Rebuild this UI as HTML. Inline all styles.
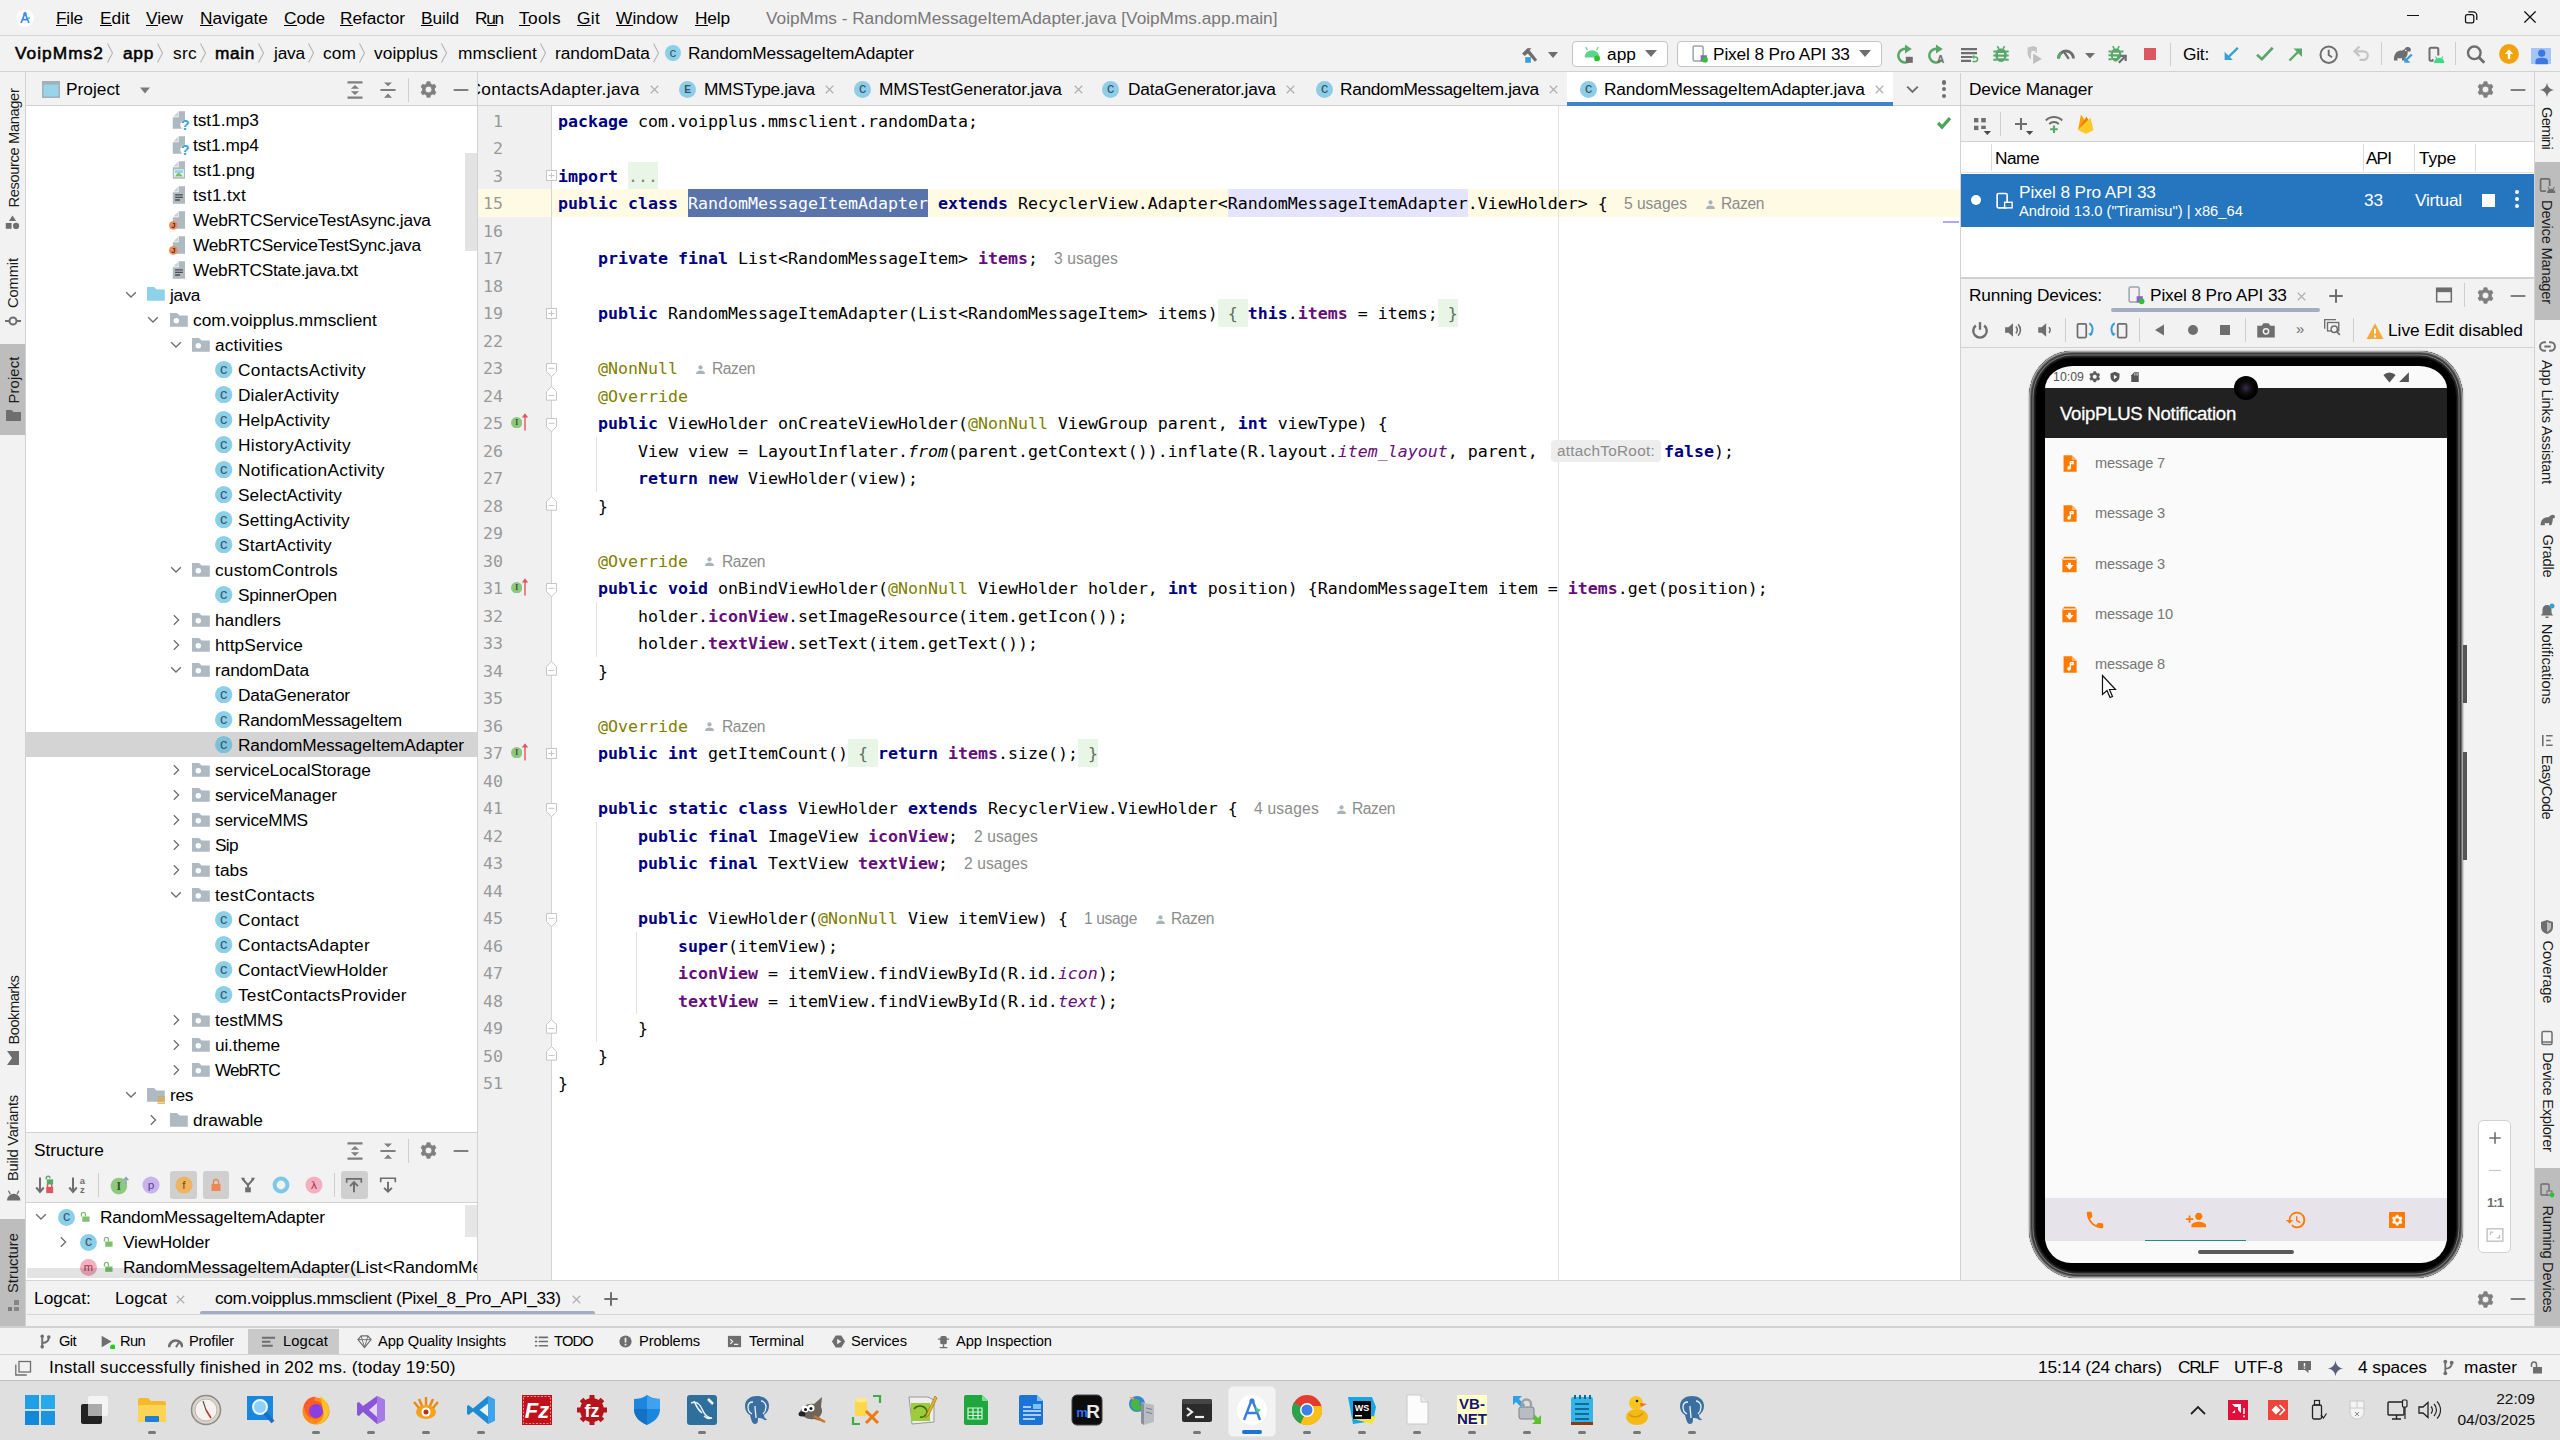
<!DOCTYPE html><html><head><meta charset="utf-8"><title>VoipMms - RandomMessageItemAdapter.java</title><style>
html,body{margin:0;padding:0;background:#f2f2f2;}
#r{position:relative;width:2560px;height:1440px;overflow:hidden;background:#f2f2f2;font-family:"Liberation Sans",sans-serif;color:#000;}
#r div,#r span.t,#r svg{position:absolute;}
#r .t{white-space:pre;}
.code{font-family:"DejaVu Sans Mono","Liberation Mono",monospace;font-size:16.6px;letter-spacing:0.007px;white-space:pre;line-height:27.5px;height:27.5px;color:#000;}
.code b{color:#000080;}
.code .f{color:#660e7a;font-weight:bold;}
.code .a{color:#808000;}
.code i{color:#000;}
.code i.s{color:#660e7a;}
.ln{font-family:"DejaVu Sans Mono","Liberation Mono",monospace;font-size:16.6px;color:#999;line-height:27.5px;text-align:right;width:40px;}
.hint{color:#8c8c8c;}
.clip{overflow:hidden;}
</style></head><body><div id="r">
<div style="left:0px;top:35px;width:2560px;height:1px;background:#d6d6d6;"></div>
<div style="left:0px;top:71px;width:2560px;height:1px;background:#d1d1d1;"></div>
<svg style="left:16.0px;top:9.0px;" width="18" height="18" viewBox="0 0 16 16"><circle cx="8" cy="8" r="7.800" fill="#fff"/><path d="M8 3.500 4.500 12.500M8 3.500l3.500 9M5.500 9.500h5" fill="none" stroke="#4285f4" stroke-width="1.500"/><circle cx="8" cy="4.200" r="1.500" fill="#4285f4"/><circle cx="11.500" cy="8" r="1" fill="#3ddc84"/></svg>
<span class="t" style="top:6.0px;line-height:24px;font-size:17.3px;left:56px;color:#000;letter-spacing:-0.219px;">File</span>
<div style="left:56px;top:25px;width:11px;height:1px;background:#000;"></div>
<span class="t" style="top:6.0px;line-height:24px;font-size:17.3px;left:100px;color:#000;letter-spacing:0.047px;">Edit</span>
<div style="left:100px;top:25px;width:12px;height:1px;background:#000;"></div>
<span class="t" style="top:6.0px;line-height:24px;font-size:17.3px;left:146px;color:#000;letter-spacing:-0.047px;">View</span>
<div style="left:146px;top:25px;width:12px;height:1px;background:#000;"></div>
<span class="t" style="top:6.0px;line-height:24px;font-size:17.3px;left:200px;color:#000;letter-spacing:-0.035px;">Navigate</span>
<div style="left:200px;top:25px;width:13px;height:1px;background:#000;"></div>
<span class="t" style="top:6.0px;line-height:24px;font-size:17.3px;left:284px;color:#000;letter-spacing:-0.090px;">Code</span>
<div style="left:284px;top:25px;width:13px;height:1px;background:#000;"></div>
<span class="t" style="top:6.0px;line-height:24px;font-size:17.3px;left:340px;color:#000;letter-spacing:-0.048px;">Refactor</span>
<div style="left:340px;top:25px;width:13px;height:1px;background:#000;"></div>
<span class="t" style="top:6.0px;line-height:24px;font-size:17.3px;left:421px;color:#000;letter-spacing:-0.094px;">Build</span>
<div style="left:421px;top:25px;width:12px;height:1px;background:#000;"></div>
<span class="t" style="top:6.0px;line-height:24px;font-size:17.3px;left:475px;color:#000;letter-spacing:-1.246px;">Run</span>
<div style="left:487px;top:25px;width:10px;height:1px;background:#000;"></div>
<span class="t" style="top:6.0px;line-height:24px;font-size:17.3px;left:519px;color:#000;letter-spacing:0.323px;">Tools</span>
<div style="left:519px;top:25px;width:11px;height:1px;background:#000;"></div>
<span class="t" style="top:6.0px;line-height:24px;font-size:17.3px;left:577px;color:#000;letter-spacing:0.298px;">Git</span>
<div style="left:577px;top:25px;width:14px;height:1px;background:#000;"></div>
<span class="t" style="top:6.0px;line-height:24px;font-size:17.3px;left:616px;color:#000;letter-spacing:0.078px;">Window</span>
<div style="left:616px;top:25px;width:17px;height:1px;background:#000;"></div>
<span class="t" style="top:6.0px;line-height:24px;font-size:17.3px;left:695px;color:#000;letter-spacing:-0.145px;">Help</span>
<div style="left:695px;top:25px;width:13px;height:1px;background:#000;"></div>
<span class="t" style="top:6.0px;line-height:24px;font-size:17.3px;left:766px;color:#787878;letter-spacing:-0.026px;">VoipMms - RandomMessageItemAdapter.java [VoipMms.app.main]</span>
<div style="left:2407px;top:14.8px;width:12px;height:1.3px;background:#111;"></div>
<svg style="left:2463px;top:9px;" width="16" height="16" viewBox="0 0 16 16"><rect x="2.500" y="5.500" width="8.300" height="8.300" rx="1.900" fill="none" stroke="#111" stroke-width="1.250"/><path d="M5.300 2.800h4.700a3.800 3.800 0 0 1 3.800 3.800v4.400" fill="none" stroke="#111" stroke-width="1.250"/></svg>
<svg style="left:2524px;top:11px;" width="12" height="12" viewBox="0 0 12 12"><path d="M0.400 0.400 11.600 11.600M11.600 0.400 0.400 11.600" stroke="#111" stroke-width="1.250"/></svg>
<span class="t" style="top:41.0px;line-height:24px;font-size:17.3px;left:15px;color:#000;letter-spacing:1.029px;-webkit-text-stroke:0.550px #000;">VoipMms2</span>
<svg style="left:105px;top:42px;" width="10" height="22" viewBox="0 0 10 22"><path d="M2.5 1.5 7.5 11 2.5 20.5" fill="none" stroke="#b4b4b4" stroke-width="1.1"/></svg>
<span class="t" style="top:41.0px;line-height:24px;font-size:17.3px;left:123px;color:#000;letter-spacing:0.712px;-webkit-text-stroke:0.550px #000;">app</span>
<svg style="left:155px;top:42px;" width="10" height="22" viewBox="0 0 10 22"><path d="M2.5 1.5 7.5 11 2.5 20.5" fill="none" stroke="#b4b4b4" stroke-width="1.1"/></svg>
<span class="t" style="top:41.0px;line-height:24px;font-size:17.3px;left:173px;color:#000;letter-spacing:0.313px;">src</span>
<svg style="left:198px;top:42px;" width="10" height="22" viewBox="0 0 10 22"><path d="M2.5 1.5 7.5 11 2.5 20.5" fill="none" stroke="#b4b4b4" stroke-width="1.1"/></svg>
<span class="t" style="top:41.0px;line-height:24px;font-size:17.3px;left:215px;color:#000;letter-spacing:0.625px;-webkit-text-stroke:0.550px #000;">main</span>
<svg style="left:256px;top:42px;" width="10" height="22" viewBox="0 0 10 22"><path d="M2.5 1.5 7.5 11 2.5 20.5" fill="none" stroke="#b4b4b4" stroke-width="1.1"/></svg>
<span class="t" style="top:41.0px;line-height:24px;font-size:17.3px;left:274px;color:#000;letter-spacing:-0.184px;">java</span>
<svg style="left:306px;top:42px;" width="10" height="22" viewBox="0 0 10 22"><path d="M2.5 1.5 7.5 11 2.5 20.5" fill="none" stroke="#b4b4b4" stroke-width="1.1"/></svg>
<span class="t" style="top:41.0px;line-height:24px;font-size:17.3px;left:323px;color:#000;letter-spacing:0.106px;">com</span>
<svg style="left:357px;top:42px;" width="10" height="22" viewBox="0 0 10 22"><path d="M2.5 1.5 7.5 11 2.5 20.5" fill="none" stroke="#b4b4b4" stroke-width="1.1"/></svg>
<span class="t" style="top:41.0px;line-height:24px;font-size:17.3px;left:374px;color:#000;letter-spacing:0.066px;">voipplus</span>
<svg style="left:439px;top:42px;" width="10" height="22" viewBox="0 0 10 22"><path d="M2.5 1.5 7.5 11 2.5 20.5" fill="none" stroke="#b4b4b4" stroke-width="1.1"/></svg>
<span class="t" style="top:41.0px;line-height:24px;font-size:17.3px;left:458px;color:#000;letter-spacing:0.127px;">mmsclient</span>
<svg style="left:538px;top:42px;" width="10" height="22" viewBox="0 0 10 22"><path d="M2.5 1.5 7.5 11 2.5 20.5" fill="none" stroke="#b4b4b4" stroke-width="1.1"/></svg>
<span class="t" style="top:41.0px;line-height:24px;font-size:17.3px;left:555px;color:#000;letter-spacing:-0.020px;">randomData</span>
<svg style="left:651px;top:42px;" width="10" height="22" viewBox="0 0 10 22"><path d="M2.5 1.5 7.5 11 2.5 20.5" fill="none" stroke="#b4b4b4" stroke-width="1.1"/></svg>
<svg style="left:665.0px;top:45.0px;" width="16" height="16" viewBox="0 0 16 16"><circle cx="8" cy="8" r="8" fill="#8bd0e8"/><text x="8" y="11.7" text-anchor="middle" font-family="Liberation Sans, sans-serif" font-size="13.6" font-weight="normal" fill="#3b5a6b">c</text></svg>
<span class="t" style="top:41.0px;line-height:24px;font-size:17.3px;left:688px;color:#000;letter-spacing:-0.160px;">RandomMessageItemAdapter</span>
<svg style="left:1519.0px;top:44.0px;" width="20" height="20" viewBox="0 0 16 16"><path d="M2.5 7.5 7 3.2l3 .3L8.5 5l6 7.5-1.8 1.6L7 7.5 4.5 9.5z" fill="#6e6e6e"/><rect x="5" y="10.5" width="4.5" height="4.5" fill="#389fd6"/></svg>
<svg style="left:1547px;top:51px;" width="12" height="8" viewBox="0 0 12 8"><path d="M1 1h10L6 7z" fill="#6e6e6e"/></svg>
<div style="left:1571.500px;top:40.500px;width:96.500px;height:26.500px;background:#fff;border:1px solid #c4c4c4;border-radius:4px;box-sizing:border-box;"></div>
<svg style="left:1583.0px;top:44.0px;" width="18" height="18" viewBox="0 0 16 16"><path d="M1.5 12a6.5 6.5 0 0 1 13 0z" fill="#5fd38d"/><path d="M4 5.5 2.5 2.8M12 5.5l1.5-2.7" stroke="#5fd38d" stroke-width="1.1"/><circle cx="12.5" cy="12.8" r="2.6" fill="#2fc033"/></svg>
<span class="t" style="top:42.0px;line-height:24px;font-size:17.3px;left:1607px;color:#000;letter-spacing:0.045px;">app</span>
<svg style="left:1644px;top:49px;" width="14" height="9" viewBox="0 0 14 9"><path d="M1 1h12L7 8z" fill="#6e6e6e"/></svg>
<div style="left:1676.500px;top:40.500px;width:205.500px;height:26.500px;background:#fff;border:1px solid #c4c4c4;border-radius:4px;box-sizing:border-box;"></div>
<svg style="left:1690.0px;top:44.0px;" width="20" height="20" viewBox="0 0 16 16"><rect x="2.5" y="1.5" width="8" height="12" rx="1.2" fill="#fff" stroke="#9aa4ae" stroke-width="1.2"/><rect x="8.5" y="9" width="5" height="5" fill="#8f5fd0"/><circle cx="12" cy="12.5" r="2.3" fill="#2fc033"/></svg>
<span class="t" style="top:42.0px;line-height:24px;font-size:17.3px;left:1713px;color:#000;letter-spacing:-0.136px;">Pixel 8 Pro API 33</span>
<svg style="left:1858px;top:49px;" width="14" height="9" viewBox="0 0 14 9"><path d="M1 1h12L7 8z" fill="#6e6e6e"/></svg>
<svg style="left:1894.5px;top:44.0px;" width="20" height="20" viewBox="0 0 20 20"><path d="M10.500 4.700A6.900 6.900 0 1 0 15.600 16" fill="none" stroke="#59a869" stroke-width="2.500"/><path d="M10 0.500 16.800 5 10 9.500z" fill="#59a869"/><rect x="10.800" y="12.800" width="7" height="6" fill="#6e6e6e"/></svg>
<svg style="left:1925.5px;top:44.0px;" width="20" height="20" viewBox="0 0 20 20"><path d="M10.500 4.700A6.900 6.900 0 1 0 15.600 16" fill="none" stroke="#59a869" stroke-width="2.500"/><path d="M10 0.500 16.800 5 10 9.500z" fill="#59a869"/><text x="14.500" y="18.800" font-family="Liberation Sans, sans-serif" font-size="10.500" font-weight="bold" fill="#6e6e6e" text-anchor="middle">A</text></svg>
<svg style="left:1959.0px;top:44.0px;" width="20" height="20" viewBox="0 0 20 20"><path d="M2 5.200h16M2 9.200h16M2 13h11M2 16.800h10" stroke="#6e6e6e" stroke-width="2.200"/><path d="M13.500 17.500h2.800a2.300 2.300 0 0 0 0-4.600H14.800" fill="none" stroke="#59a869" stroke-width="1.500"/><path d="M15.300 10.600 12.500 12.900l2.800 2.300z" fill="#59a869"/></svg>
<svg style="left:1991.0px;top:44.0px;" width="20" height="20" viewBox="0 0 20 20"><path d="M10 4.500c3.600 0 5.600 2.600 5.600 6.500s-2 7-5.600 7-5.600-3.100-5.600-7 2-6.500 5.600-6.500z" fill="#59a869"/><path d="M6.300 2.200 8 4.800M13.700 2.200 12 4.800" stroke="#59a869" stroke-width="1.600"/><path d="M2.300 7.500h3.500M2.300 11.500h3M2.300 15.700h3.500M17.700 7.500h-3.500M17.700 11.500h-3M17.700 15.700h-3.500" stroke="#59a869" stroke-width="1.900"/><path d="M7 9.700h6M7 13.500h6" stroke="#f2f2f2" stroke-width="1.500"/></svg>
<svg style="left:2023.0px;top:44.0px;" width="20" height="20" viewBox="0 0 20 20"><path d="M4.500 3.500 10.500 2l3.500 1.500V9l-6 0v6.500C5.500 14 4.500 11 4.500 8z" fill="#c4c4c4"/><path d="M8.500 7h4v8h-4z" fill="#f2f2f2"/><path d="M10.200 9.500 18.800 15l-8.600 5z" fill="#bdbdbd"/></svg>
<svg style="left:2054.5px;top:43.0px;" width="22" height="22" viewBox="0 0 22 22"><path d="M3.500 15.500a7.500 7.500 0 0 1 15 0" fill="none" stroke="#6e6e6e" stroke-width="3"/><path d="M3.500 15.500a7.500 7.500 0 0 1 2.600-5.700" fill="none" stroke="#59a869" stroke-width="3"/><path d="M13.800 15.800 8 7.500" stroke="#6e6e6e" stroke-width="2.300"/></svg>
<svg style="left:2085px;top:53px;" width="10" height="6" viewBox="0 0 10 6"><path d="M0 0h10L5 5.500z" fill="#6e6e6e"/></svg>
<svg style="left:2107.5px;top:44.0px;" width="20" height="20" viewBox="0 0 20 20"><path d="M8 4.500c3.300 0 5.200 2.500 5.200 6.200s-1.900 6.800-5.200 6.800-5.200-3.100-5.200-6.800S4.700 4.500 8 4.500z" fill="#59a869"/><path d="M4.800 2.200 6.300 4.800M11.200 2.200 9.700 4.800" stroke="#59a869" stroke-width="1.600"/><path d="M0.500 7.500h3.300M0.500 11.300h2.800M0.500 15.300h3.300M15.500 7.500h-3.300" stroke="#59a869" stroke-width="1.900"/><path d="M5 9.500h6M5 13.200h4" stroke="#f2f2f2" stroke-width="1.400"/><path d="M10.500 19 17.500 12" stroke="#f2f2f2" stroke-width="4.500"/><path d="M10.800 18.700 17.300 12.200M12.500 11.800h5.200V17" fill="none" stroke="#6e6e6e" stroke-width="2.200"/></svg>
<div style="left:2143.7px;top:48px;width:12.5px;height:12.3px;background:#db5860;"></div>
<div style="left:2170px;top:43px;width:1px;height:23px;background:#cdcdcd;"></div>
<span class="t" style="top:42.0px;line-height:24px;font-size:17.3px;left:2183px;color:#000;letter-spacing:-0.228px;">Git:</span>
<svg style="left:2221px;top:44px;" width="20" height="20" viewBox="0 0 20 20"><path d="M16.800 3.800 6 14.500" stroke="#389fd6" stroke-width="2.400"/><path d="M3.600 7.800V16h8.200z" fill="#389fd6"/></svg>
<svg style="left:2254px;top:44px;" width="20" height="20" viewBox="0 0 20 20"><path d="M3 10.800 7.900 15.200 18.700 3.800" fill="none" stroke="#59a869" stroke-width="2.700"/></svg>
<svg style="left:2286px;top:44px;" width="20" height="20" viewBox="0 0 20 20"><path d="M3.500 16.500 14 6" stroke="#59a869" stroke-width="2.400"/><path d="M7.500 4.500H16v8.500z" fill="#59a869"/></svg>
<svg style="left:2318px;top:43.5px;" width="22" height="22" viewBox="0 0 22 22"><circle cx="10.700" cy="10.700" r="8.200" fill="none" stroke="#6e6e6e" stroke-width="2"/><path d="M10.700 5.800v5.200l3.300 2.200" fill="none" stroke="#6e6e6e" stroke-width="1.900"/></svg>
<svg style="left:2351px;top:44px;" width="20" height="20" viewBox="0 0 20 20"><path d="M5.500 7.300h7a4.300 4.300 0 0 1 0 8.600H8.500" fill="none" stroke="#c4c4c4" stroke-width="2.200"/><path d="M8.500 2.500 3.500 7.300l5 4.800" fill="none" stroke="#c4c4c4" stroke-width="2.200"/></svg>
<div style="left:2381px;top:42px;width:1px;height:23px;background:#cdcdcd;"></div>
<svg style="left:2393px;top:45px;" width="22" height="20" viewBox="0 0 22 20"><path d="M1 15.500c-.5-6 2.500-10 7-10 1.500 0 3-.5 4-2 1-1.500 3-1.800 4.500-1 1.500.8 1.800 2.500 1 3.500-.8 1-2 1-2.800.3 0 3-.5 5.500-1.700 7.200l-1.500 2h-2.500v-2.500c-1.500.5-3 .5-4.500 0v2.500z" fill="#6e6e6e"/><circle cx="12.800" cy="5.500" r=".8" fill="#f2f2f2"/><path d="M18.800 9.500 13 15.300" stroke="#f2f2f2" stroke-width="4.500"/><path d="M18.800 9.500 13.500 14.800" stroke="#389fd6" stroke-width="2.300"/><path d="M11.300 11.500v6.200h6.200z" fill="#389fd6"/></svg>
<svg style="left:2426px;top:45px;" width="22" height="20" viewBox="0 0 22 20"><rect x="3.500" y="2.800" width="8.800" height="13" rx="1.500" fill="none" stroke="#6e6e6e" stroke-width="2"/><path d="M6 14.800h4" stroke="#6e6e6e" stroke-width="1.400"/><rect x="7.500" y="10.500" width="12" height="9" fill="#f2f2f2"/><path d="M8 18a5.200 5.200 0 0 1 10.400 0z" fill="#3ddc84"/><path d="M9.500 11.500l1.300 2.200M16.800 11.500l-1.300 2.200" stroke="#3ddc84" stroke-width="1.200"/></svg>
<div style="left:2455px;top:42px;width:1px;height:23px;background:#cdcdcd;"></div>
<svg style="left:2465px;top:44px;" width="22" height="22" viewBox="0 0 22 22"><circle cx="9.300" cy="8.800" r="6.300" fill="none" stroke="#6e6e6e" stroke-width="2.400"/><path d="M13.800 13.300 19.300 18.800" stroke="#6e6e6e" stroke-width="2.800"/></svg>
<svg style="left:2499px;top:44px;" width="20" height="20" viewBox="0 0 20 20"><circle cx="10" cy="10" r="9.900" fill="#f0a30a"/><path d="M10 15V6.500" stroke="#fff" stroke-width="2.400"/><path d="M5.800 10 10 5.500 14.200 10z" fill="#fff"/></svg>
<div style="left:2531px;top:48px;width:20px;height:16.2px;background:#a6c5f7;"></div>
<svg style="left:2531px;top:48px;" width="20" height="17" viewBox="0 0 20 17"><circle cx="10.700" cy="5.200" r="3.600" fill="#3d77e0"/><path d="M4.500 16.200v-3.500c0-2 2-3 6.200-3s6.200 1 6.200 3v3.500z" fill="#3d77e0"/></svg>
<div style="left:25px;top:72px;width:1px;height:1255px;background:#d1d1d1;"></div>
<div style="left:0px;top:344px;width:25px;height:91px;background:#bdbdbd;"></div>
<div style="left:0px;top:1219px;width:25px;height:108px;background:#bdbdbd;"></div>
<span class="t" style="left:-46.5px;top:137.5px;width:119px;height:20px;line-height:20px;font-size:14.7px;letter-spacing:-0.376px;color:#1a1a1a;transform:rotate(-90deg);transform-origin:50% 50%;text-align:left;">Resource Manager</span>
<svg style="left:5.300000000000001px;top:215.0px;" width="15" height="15" viewBox="0 0 16 16"><path d="M8 0.500l3.800 6h-7.600z" fill="#6e6e6e"/><rect x="0.800" y="8.500" width="6.200" height="6.200" fill="#6e6e6e"/><circle cx="11.800" cy="11.600" r="3.300" fill="#6e6e6e"/></svg>
<span class="t" style="left:-12.0px;top:273.0px;width:50px;height:20px;line-height:20px;font-size:14.7px;letter-spacing:-0.106px;color:#1a1a1a;transform:rotate(-90deg);transform-origin:50% 50%;text-align:left;">Commit</span>
<svg style="left:5.199999999999999px;top:313.3px;" width="16" height="16" viewBox="0 0 16 16"><circle cx="8" cy="8" r="3.500" fill="none" stroke="#6e6e6e" stroke-width="2"/><path d="M0 8h4.500M11.500 8H16" stroke="#6e6e6e" stroke-width="2"/></svg>
<span class="t" style="left:-10.5px;top:369.5px;width:47px;height:20px;line-height:20px;font-size:14.7px;letter-spacing:0.178px;color:#1a1a1a;transform:rotate(-90deg);transform-origin:50% 50%;text-align:left;">Project</span>
<svg style="left:5.8px;top:409.7px;" width="15" height="11.2" viewBox="0 0 15 11.200"><path fill="#6e6e6e" d="M0 0h5.500l2 2H15v9.200H0z"/></svg>
<span class="t" style="left:-21.5px;top:999.5px;width:69px;height:20px;line-height:20px;font-size:14.7px;letter-spacing:-0.503px;color:#1a1a1a;transform:rotate(-90deg);transform-origin:50% 50%;text-align:left;">Bookmarks</span>
<svg style="left:7px;top:1051px;" width="12" height="14" viewBox="0 0 12 14"><path d="M12 0H0l5 7-5 7h12z" fill="#6e6e6e"/></svg>
<span class="t" style="left:-30.0px;top:1128.0px;width:86px;height:20px;line-height:20px;font-size:14.7px;letter-spacing:-0.258px;color:#1a1a1a;transform:rotate(-90deg);transform-origin:50% 50%;text-align:left;">Build Variants</span>
<svg style="left:6.5px;top:1188.5px;" width="14" height="12" viewBox="0 0 14 12"><path d="M0 11.500a6.700 6.700 0 0 1 13.400 0z" fill="#6e6e6e"/><path d="M3.300 5.200 1.500 1.800M10.100 5.200l1.800-3.400" stroke="#6e6e6e" stroke-width="1.300"/></svg>
<span class="t" style="left:-17.0px;top:1253.0px;width:60px;height:20px;line-height:20px;font-size:14.7px;letter-spacing:0.040px;color:#1a1a1a;transform:rotate(-90deg);transform-origin:50% 50%;text-align:left;">Structure</span>
<div style="left:7.8px;top:1306.5px;width:4.7px;height:4.7px;background:#7c7c7c;"></div>
<div style="left:14px;top:1300.2px;width:4.7px;height:4.7px;background:#858585;"></div>
<div style="left:14px;top:1306.5px;width:4.7px;height:4.7px;background:#858585;"></div>
<div style="left:26px;top:105px;width:451px;height:1px;background:#d1d1d1;"></div>
<div style="left:477px;top:72px;width:1px;height:1208px;background:#d1d1d1;"></div>
<svg style="left:42px;top:81px;" width="18" height="17" viewBox="0 0 18 17"><rect x="0" y="0" width="18" height="17" fill="#a3afb9"/><rect x="1.500" y="3.500" width="15" height="12" fill="#98d4ea"/></svg>
<span class="t" style="top:77.0px;line-height:24px;font-size:17.3px;left:66px;color:#000;letter-spacing:0.022px;">Project</span>
<svg style="left:140px;top:87px;" width="10" height="7" viewBox="0 0 10 7"><path d="M0 0.500h10L5 6.500z" fill="#7a7a7a"/></svg>
<svg style="left:347px;top:81px;" width="16" height="18" viewBox="0 0 16 18"><rect x="0.4" y="0.3" width="15.2" height="2.3" rx="0.6" fill="#7f7f7f"/><rect x="0.4" y="15.4" width="15.2" height="2.3" rx="0.6" fill="#7f7f7f"/><path d="M8 4.1l4.1 3.6H3.9zM8 13.9l4.100-3.600H3.900z" fill="#7f7f7f"/></svg>
<svg style="left:380px;top:81px;" width="16" height="18" viewBox="0 0 16 18"><rect x="0.4" y="7.9" width="15.2" height="2.1" rx="0.6" fill="#7f7f7f"/><path d="M8 5.300l4-3.800H4zM8 12.600l4 4.100H4z" fill="#7f7f7f"/></svg>
<div style="left:408px;top:78px;width:1px;height:24px;background:#cfcfcf;"></div>
<svg style="left:420.2px;top:81.3px;" width="17" height="17" viewBox="0 0 24 24"><path fill="#7f7f7f" fill-rule="evenodd" stroke="#7f7f7f" stroke-width="1" stroke-linejoin="round" d="M9.31 3.73 L9.83 1.01 L14.17 1.01 L14.69 3.73 L17.82 5.53 L20.43 4.63 L22.60 8.38 L20.51 10.19 L20.51 13.81 L22.60 15.62 L20.43 19.37 L17.82 18.47 L14.69 20.27 L14.17 22.99 L9.83 22.99 L9.31 20.27 L6.18 18.47 L3.57 19.37 L1.40 15.62 L3.49 13.81 L3.49 10.19 L1.40 8.38 L3.57 4.63 L6.18 5.53Z M16.70 12.00 A4.7 4.7 0 1 0 7.30 12.00 A4.7 4.7 0 1 0 16.70 12.00Z"/></svg>
<svg style="left:453.0px;top:82.0px;" width="16" height="16" viewBox="0 0 16 16"><rect x="0.5" y="7" width="15" height="2" rx="0.8" fill="#7f7f7f"/></svg>
<div style="left:26px;top:106px;width:451px;height:1026px;background:#fff;"></div>
<div style="left:465px;top:152.5px;width:12px;height:98px;background:#e3e3e3;"></div>
<div style="left:26px;top:732.3px;width:451px;height:24.5px;background:#d4d4d4;"></div>
<svg style="left:169px;top:110px;" width="22" height="21" viewBox="0 0 22 21"><path fill="#aeb9c0" d="M9.6 1.2H16V18.800H3.800V7.300H9.600z"/><path fill="#c6cfd5" d="M8.800 2v4.500H4.400z"/><circle cx="16.3" cy="14.8" r="5" fill="#fff"/><text x="16.3" y="19.7" font-family="Liberation Sans, sans-serif" font-size="14.500" font-weight="bold" fill="#35a5d8" text-anchor="middle">?</text></svg>
<span class="t" style="top:108.0px;line-height:24px;font-size:17.3px;left:193px;color:#000;letter-spacing:-0.043px;">tst1.mp3</span>
<svg style="left:169px;top:135px;" width="22" height="21" viewBox="0 0 22 21"><path fill="#aeb9c0" d="M9.6 1.2H16V18.800H3.800V7.300H9.600z"/><path fill="#c6cfd5" d="M8.800 2v4.500H4.400z"/><circle cx="16.3" cy="14.8" r="5" fill="#fff"/><text x="16.3" y="19.7" font-family="Liberation Sans, sans-serif" font-size="14.500" font-weight="bold" fill="#35a5d8" text-anchor="middle">?</text></svg>
<span class="t" style="top:133.0px;line-height:24px;font-size:17.3px;left:193px;color:#000;letter-spacing:-0.043px;">tst1.mp4</span>
<svg style="left:169px;top:160px;" width="22" height="21" viewBox="0 0 22 21"><path fill="#aeb9c0" d="M9.6 1.2H16V18.800H3.800V7.300H9.600z"/><path fill="#c6cfd5" d="M8.800 2v4.500H4.400z"/><rect x="5.2" y="9.4" width="9.600" height="7.800" fill="#f4f8f4"/><rect x="6" y="10.2" width="8" height="3" fill="#8fd3ee"/><path d="M6 16.400c1.500-3 3.500-4.200 5-3 1.200.9 2 1.600 3 3z" fill="#7cc05a"/></svg>
<span class="t" style="top:158.0px;line-height:24px;font-size:17.3px;left:193px;color:#000;letter-spacing:0.056px;">tst1.png</span>
<svg style="left:169px;top:185px;" width="22" height="21" viewBox="0 0 22 21"><path fill="#aeb9c0" d="M9.6 1.2H16V18.800H3.800V7.300H9.600z"/><path fill="#c6cfd5" d="M8.800 2v4.500H4.400z"/><path d="M6.1 9.800h7.700M6.100 12.400h7.700M6.100 15h4.900" stroke="#4d4d4d" stroke-width="1.300"/></svg>
<span class="t" style="top:183.0px;line-height:24px;font-size:17.3px;left:193px;color:#000;letter-spacing:0.256px;">tst1.txt</span>
<svg style="left:169px;top:210px;" width="22" height="21" viewBox="0 0 22 21"><path fill="#aeb9c0" d="M9.6 1.2H16V18.800H3.800V7.300H9.600z"/><path fill="#c6cfd5" d="M8.800 2v4.500H4.400z"/><circle cx="4.3" cy="15.4" r="4.300" fill="#f0895c"/><text x="4.4" y="18.2" font-family="Liberation Sans, sans-serif" font-size="7.500" font-weight="bold" fill="#4a2a1a" text-anchor="middle">J</text></svg>
<span class="t" style="top:208.0px;line-height:24px;font-size:17.3px;left:193px;color:#000;letter-spacing:-0.206px;">WebRTCServiceTestAsync.java</span>
<svg style="left:169px;top:235px;" width="22" height="21" viewBox="0 0 22 21"><path fill="#aeb9c0" d="M9.6 1.2H16V18.800H3.800V7.300H9.600z"/><path fill="#c6cfd5" d="M8.800 2v4.500H4.400z"/><circle cx="4.3" cy="15.4" r="4.300" fill="#f0895c"/><text x="4.4" y="18.2" font-family="Liberation Sans, sans-serif" font-size="7.500" font-weight="bold" fill="#4a2a1a" text-anchor="middle">J</text></svg>
<span class="t" style="top:233.0px;line-height:24px;font-size:17.3px;left:193px;color:#000;letter-spacing:-0.266px;">WebRTCServiceTestSync.java</span>
<svg style="left:169px;top:260px;" width="22" height="21" viewBox="0 0 22 21"><path fill="#aeb9c0" d="M9.6 1.2H16V18.800H3.800V7.300H9.600z"/><path fill="#c6cfd5" d="M8.800 2v4.500H4.400z"/><path d="M6.1 9.800h7.700M6.100 12.400h7.700M6.100 15h4.900" stroke="#4d4d4d" stroke-width="1.300"/></svg>
<span class="t" style="top:258.0px;line-height:24px;font-size:17.3px;left:193px;color:#000;letter-spacing:-0.276px;">WebRTCState.java.txt</span>
<svg style="left:123.0px;top:286.7px;" width="16" height="16" viewBox="0 0 16 16"><path d="M3.2 5.200 8 10 12.800 5.200" fill="none" stroke="#6e6e6e" stroke-width="1.3"/></svg>
<svg style="left:147px;top:287.3px;" width="18" height="14" viewBox="0 0 18 14"><path fill="#8dd1ea" d="M0 0H7L9.6 2.4H17.800V13.700H0z"/></svg>
<span class="t" style="top:283.0px;line-height:24px;font-size:17.3px;left:170px;color:#000;letter-spacing:-0.434px;">java</span>
<svg style="left:145.0px;top:311.7px;" width="16" height="16" viewBox="0 0 16 16"><path d="M3.2 5.200 8 10 12.800 5.200" fill="none" stroke="#6e6e6e" stroke-width="1.3"/></svg>
<svg style="left:170px;top:312.7px;" width="18" height="14" viewBox="0 0 18 14"><path fill="#aeb9c2" d="M0 0H7L9.6 2.4H17.800V13.700H0z"/><circle cx="6.3" cy="7.8" r="2.7" fill="#fff"/></svg>
<span class="t" style="top:308.0px;line-height:24px;font-size:17.3px;left:193px;color:#000;letter-spacing:0.017px;">com.voipplus.mmsclient</span>
<svg style="left:168.0px;top:336.7px;" width="16" height="16" viewBox="0 0 16 16"><path d="M3.2 5.200 8 10 12.800 5.200" fill="none" stroke="#6e6e6e" stroke-width="1.3"/></svg>
<svg style="left:192px;top:337.7px;" width="18" height="14" viewBox="0 0 18 14"><path fill="#aeb9c2" d="M0 0H7L9.6 2.4H17.800V13.700H0z"/><circle cx="6.3" cy="7.8" r="2.7" fill="#fff"/></svg>
<span class="t" style="top:333.0px;line-height:24px;font-size:17.3px;left:215px;color:#000;letter-spacing:0.166px;">activities</span>
<svg style="left:215.3px;top:361.1px;" width="17.4" height="17.4" viewBox="0 0 16 16"><circle cx="8" cy="8" r="8" fill="#8bd0e8"/><text x="8" y="11.7" text-anchor="middle" font-family="Liberation Sans, sans-serif" font-size="13.6" font-weight="normal" fill="#3b5a6b">c</text></svg>
<span class="t" style="top:358.0px;line-height:24px;font-size:17.3px;left:238px;color:#000;letter-spacing:0.309px;">ContactsActivity</span>
<svg style="left:215.3px;top:386.1px;" width="17.4" height="17.4" viewBox="0 0 16 16"><circle cx="8" cy="8" r="8" fill="#8bd0e8"/><text x="8" y="11.7" text-anchor="middle" font-family="Liberation Sans, sans-serif" font-size="13.6" font-weight="normal" fill="#3b5a6b">c</text></svg>
<span class="t" style="top:383.0px;line-height:24px;font-size:17.3px;left:238px;color:#000;letter-spacing:0.073px;">DialerActivity</span>
<svg style="left:215.3px;top:411.1px;" width="17.4" height="17.4" viewBox="0 0 16 16"><circle cx="8" cy="8" r="8" fill="#8bd0e8"/><text x="8" y="11.7" text-anchor="middle" font-family="Liberation Sans, sans-serif" font-size="13.6" font-weight="normal" fill="#3b5a6b">c</text></svg>
<span class="t" style="top:408.0px;line-height:24px;font-size:17.3px;left:238px;color:#000;letter-spacing:0.136px;">HelpActivity</span>
<svg style="left:215.3px;top:436.1px;" width="17.4" height="17.4" viewBox="0 0 16 16"><circle cx="8" cy="8" r="8" fill="#8bd0e8"/><text x="8" y="11.7" text-anchor="middle" font-family="Liberation Sans, sans-serif" font-size="13.6" font-weight="normal" fill="#3b5a6b">c</text></svg>
<span class="t" style="top:433.0px;line-height:24px;font-size:17.3px;left:238px;color:#000;letter-spacing:0.292px;">HistoryActivity</span>
<svg style="left:215.3px;top:461.1px;" width="17.4" height="17.4" viewBox="0 0 16 16"><circle cx="8" cy="8" r="8" fill="#8bd0e8"/><text x="8" y="11.7" text-anchor="middle" font-family="Liberation Sans, sans-serif" font-size="13.6" font-weight="normal" fill="#3b5a6b">c</text></svg>
<span class="t" style="top:458.0px;line-height:24px;font-size:17.3px;left:238px;color:#000;letter-spacing:0.331px;">NotificationActivity</span>
<svg style="left:215.3px;top:486.1px;" width="17.4" height="17.4" viewBox="0 0 16 16"><circle cx="8" cy="8" r="8" fill="#8bd0e8"/><text x="8" y="11.7" text-anchor="middle" font-family="Liberation Sans, sans-serif" font-size="13.6" font-weight="normal" fill="#3b5a6b">c</text></svg>
<span class="t" style="top:483.0px;line-height:24px;font-size:17.3px;left:238px;color:#000;letter-spacing:0.081px;">SelectActivity</span>
<svg style="left:215.3px;top:511.09999999999997px;" width="17.4" height="17.4" viewBox="0 0 16 16"><circle cx="8" cy="8" r="8" fill="#8bd0e8"/><text x="8" y="11.7" text-anchor="middle" font-family="Liberation Sans, sans-serif" font-size="13.6" font-weight="normal" fill="#3b5a6b">c</text></svg>
<span class="t" style="top:508.0px;line-height:24px;font-size:17.3px;left:238px;color:#000;letter-spacing:0.223px;">SettingActivity</span>
<svg style="left:215.3px;top:536.0999999999999px;" width="17.4" height="17.4" viewBox="0 0 16 16"><circle cx="8" cy="8" r="8" fill="#8bd0e8"/><text x="8" y="11.7" text-anchor="middle" font-family="Liberation Sans, sans-serif" font-size="13.6" font-weight="normal" fill="#3b5a6b">c</text></svg>
<span class="t" style="top:533.0px;line-height:24px;font-size:17.3px;left:238px;color:#000;letter-spacing:0.206px;">StartActivity</span>
<svg style="left:168.0px;top:561.7px;" width="16" height="16" viewBox="0 0 16 16"><path d="M3.2 5.200 8 10 12.800 5.200" fill="none" stroke="#6e6e6e" stroke-width="1.3"/></svg>
<svg style="left:192px;top:562.7px;" width="18" height="14" viewBox="0 0 18 14"><path fill="#aeb9c2" d="M0 0H7L9.6 2.4H17.800V13.700H0z"/><circle cx="6.3" cy="7.8" r="2.7" fill="#fff"/></svg>
<span class="t" style="top:558.0px;line-height:24px;font-size:17.3px;left:215px;color:#000;letter-spacing:0.201px;">customControls</span>
<svg style="left:215.3px;top:586.0999999999999px;" width="17.4" height="17.4" viewBox="0 0 16 16"><circle cx="8" cy="8" r="8" fill="#8bd0e8"/><text x="8" y="11.7" text-anchor="middle" font-family="Liberation Sans, sans-serif" font-size="13.6" font-weight="normal" fill="#3b5a6b">c</text></svg>
<span class="t" style="top:583.0px;line-height:24px;font-size:17.3px;left:238px;color:#000;letter-spacing:-0.269px;">SpinnerOpen</span>
<svg style="left:168.0px;top:611.7px;" width="16" height="16" viewBox="0 0 16 16"><path d="M5.800 3.200 10.600 8 5.800 12.800" fill="none" stroke="#6e6e6e" stroke-width="1.3"/></svg>
<svg style="left:192px;top:612.7px;" width="18" height="14" viewBox="0 0 18 14"><path fill="#aeb9c2" d="M0 0H7L9.6 2.4H17.800V13.700H0z"/><circle cx="6.3" cy="7.8" r="2.7" fill="#fff"/></svg>
<span class="t" style="top:608.0px;line-height:24px;font-size:17.3px;left:215px;color:#000;letter-spacing:-0.046px;">handlers</span>
<svg style="left:168.0px;top:636.7px;" width="16" height="16" viewBox="0 0 16 16"><path d="M5.800 3.200 10.600 8 5.800 12.800" fill="none" stroke="#6e6e6e" stroke-width="1.3"/></svg>
<svg style="left:192px;top:637.7px;" width="18" height="14" viewBox="0 0 18 14"><path fill="#aeb9c2" d="M0 0H7L9.6 2.4H17.800V13.700H0z"/><circle cx="6.3" cy="7.8" r="2.7" fill="#fff"/></svg>
<span class="t" style="top:633.0px;line-height:24px;font-size:17.3px;left:215px;color:#000;letter-spacing:0.132px;">httpService</span>
<svg style="left:168.0px;top:661.7px;" width="16" height="16" viewBox="0 0 16 16"><path d="M3.2 5.200 8 10 12.800 5.200" fill="none" stroke="#6e6e6e" stroke-width="1.3"/></svg>
<svg style="left:192px;top:662.7px;" width="18" height="14" viewBox="0 0 18 14"><path fill="#aeb9c2" d="M0 0H7L9.6 2.4H17.800V13.700H0z"/><circle cx="6.3" cy="7.8" r="2.7" fill="#fff"/></svg>
<span class="t" style="top:658.0px;line-height:24px;font-size:17.3px;left:215px;color:#000;letter-spacing:-0.120px;">randomData</span>
<svg style="left:215.3px;top:686.0999999999999px;" width="17.4" height="17.4" viewBox="0 0 16 16"><circle cx="8" cy="8" r="8" fill="#8bd0e8"/><text x="8" y="11.7" text-anchor="middle" font-family="Liberation Sans, sans-serif" font-size="13.6" font-weight="normal" fill="#3b5a6b">c</text></svg>
<span class="t" style="top:683.0px;line-height:24px;font-size:17.3px;left:238px;color:#000;letter-spacing:-0.188px;">DataGenerator</span>
<svg style="left:215.3px;top:711.0999999999999px;" width="17.4" height="17.4" viewBox="0 0 16 16"><circle cx="8" cy="8" r="8" fill="#8bd0e8"/><text x="8" y="11.7" text-anchor="middle" font-family="Liberation Sans, sans-serif" font-size="13.6" font-weight="normal" fill="#3b5a6b">c</text></svg>
<span class="t" style="top:708.0px;line-height:24px;font-size:17.3px;left:238px;color:#000;letter-spacing:-0.308px;">RandomMessageItem</span>
<svg style="left:215.3px;top:736.0999999999999px;" width="17.4" height="17.4" viewBox="0 0 16 16"><circle cx="8" cy="8" r="8" fill="#7cc1da"/><text x="8" y="11.7" text-anchor="middle" font-family="Liberation Sans, sans-serif" font-size="13.6" font-weight="normal" fill="#3b5a6b">c</text></svg>
<span class="t" style="top:733.0px;line-height:24px;font-size:17.3px;left:238px;color:#000;letter-spacing:-0.160px;">RandomMessageItemAdapter</span>
<svg style="left:168.0px;top:761.7px;" width="16" height="16" viewBox="0 0 16 16"><path d="M5.800 3.200 10.600 8 5.800 12.800" fill="none" stroke="#6e6e6e" stroke-width="1.3"/></svg>
<svg style="left:192px;top:762.7px;" width="18" height="14" viewBox="0 0 18 14"><path fill="#aeb9c2" d="M0 0H7L9.6 2.4H17.800V13.700H0z"/><circle cx="6.3" cy="7.8" r="2.7" fill="#fff"/></svg>
<span class="t" style="top:758.0px;line-height:24px;font-size:17.3px;left:215px;color:#000;letter-spacing:-0.040px;">serviceLocalStorage</span>
<svg style="left:168.0px;top:786.7px;" width="16" height="16" viewBox="0 0 16 16"><path d="M5.800 3.200 10.600 8 5.800 12.800" fill="none" stroke="#6e6e6e" stroke-width="1.3"/></svg>
<svg style="left:192px;top:787.7px;" width="18" height="14" viewBox="0 0 18 14"><path fill="#aeb9c2" d="M0 0H7L9.6 2.4H17.800V13.700H0z"/><circle cx="6.3" cy="7.8" r="2.7" fill="#fff"/></svg>
<span class="t" style="top:783.0px;line-height:24px;font-size:17.3px;left:215px;color:#000;letter-spacing:-0.077px;">serviceManager</span>
<svg style="left:168.0px;top:811.7px;" width="16" height="16" viewBox="0 0 16 16"><path d="M5.800 3.200 10.600 8 5.800 12.800" fill="none" stroke="#6e6e6e" stroke-width="1.3"/></svg>
<svg style="left:192px;top:812.7px;" width="18" height="14" viewBox="0 0 18 14"><path fill="#aeb9c2" d="M0 0H7L9.6 2.4H17.800V13.700H0z"/><circle cx="6.3" cy="7.8" r="2.7" fill="#fff"/></svg>
<span class="t" style="top:808.0px;line-height:24px;font-size:17.3px;left:215px;color:#000;letter-spacing:-0.216px;">serviceMMS</span>
<svg style="left:168.0px;top:836.7px;" width="16" height="16" viewBox="0 0 16 16"><path d="M5.800 3.200 10.600 8 5.800 12.800" fill="none" stroke="#6e6e6e" stroke-width="1.3"/></svg>
<svg style="left:192px;top:837.7px;" width="18" height="14" viewBox="0 0 18 14"><path fill="#aeb9c2" d="M0 0H7L9.6 2.4H17.800V13.700H0z"/><circle cx="6.3" cy="7.8" r="2.7" fill="#fff"/></svg>
<span class="t" style="top:833.0px;line-height:24px;font-size:17.3px;left:215px;color:#000;letter-spacing:-0.668px;">Sip</span>
<svg style="left:168.0px;top:861.7px;" width="16" height="16" viewBox="0 0 16 16"><path d="M5.800 3.200 10.600 8 5.800 12.800" fill="none" stroke="#6e6e6e" stroke-width="1.3"/></svg>
<svg style="left:192px;top:862.7px;" width="18" height="14" viewBox="0 0 18 14"><path fill="#aeb9c2" d="M0 0H7L9.6 2.4H17.800V13.700H0z"/><circle cx="6.3" cy="7.8" r="2.7" fill="#fff"/></svg>
<span class="t" style="top:858.0px;line-height:24px;font-size:17.3px;left:215px;color:#000;letter-spacing:0.075px;">tabs</span>
<svg style="left:168.0px;top:886.7px;" width="16" height="16" viewBox="0 0 16 16"><path d="M3.2 5.200 8 10 12.800 5.200" fill="none" stroke="#6e6e6e" stroke-width="1.3"/></svg>
<svg style="left:192px;top:887.7px;" width="18" height="14" viewBox="0 0 18 14"><path fill="#aeb9c2" d="M0 0H7L9.6 2.4H17.800V13.700H0z"/><circle cx="6.3" cy="7.8" r="2.7" fill="#fff"/></svg>
<span class="t" style="top:883.0px;line-height:24px;font-size:17.3px;left:215px;color:#000;letter-spacing:0.320px;">testContacts</span>
<svg style="left:215.3px;top:911.0999999999999px;" width="17.4" height="17.4" viewBox="0 0 16 16"><circle cx="8" cy="8" r="8" fill="#8bd0e8"/><text x="8" y="11.7" text-anchor="middle" font-family="Liberation Sans, sans-serif" font-size="13.6" font-weight="normal" fill="#3b5a6b">c</text></svg>
<span class="t" style="top:908.0px;line-height:24px;font-size:17.3px;left:238px;color:#000;letter-spacing:0.197px;">Contact</span>
<svg style="left:215.3px;top:936.0999999999999px;" width="17.4" height="17.4" viewBox="0 0 16 16"><circle cx="8" cy="8" r="8" fill="#8bd0e8"/><text x="8" y="11.7" text-anchor="middle" font-family="Liberation Sans, sans-serif" font-size="13.6" font-weight="normal" fill="#3b5a6b">c</text></svg>
<span class="t" style="top:933.0px;line-height:24px;font-size:17.3px;left:238px;color:#000;letter-spacing:0.209px;">ContactsAdapter</span>
<svg style="left:215.3px;top:961.0999999999999px;" width="17.4" height="17.4" viewBox="0 0 16 16"><circle cx="8" cy="8" r="8" fill="#8bd0e8"/><text x="8" y="11.7" text-anchor="middle" font-family="Liberation Sans, sans-serif" font-size="13.6" font-weight="normal" fill="#3b5a6b">c</text></svg>
<span class="t" style="top:958.0px;line-height:24px;font-size:17.3px;left:238px;color:#000;letter-spacing:0.131px;">ContactViewHolder</span>
<svg style="left:215.3px;top:986.0999999999999px;" width="17.4" height="17.4" viewBox="0 0 16 16"><circle cx="8" cy="8" r="8" fill="#8bd0e8"/><text x="8" y="11.7" text-anchor="middle" font-family="Liberation Sans, sans-serif" font-size="13.6" font-weight="normal" fill="#3b5a6b">c</text></svg>
<span class="t" style="top:983.0px;line-height:24px;font-size:17.3px;left:238px;color:#000;letter-spacing:0.229px;">TestContactsProvider</span>
<svg style="left:168.0px;top:1011.7px;" width="16" height="16" viewBox="0 0 16 16"><path d="M5.800 3.200 10.600 8 5.800 12.800" fill="none" stroke="#6e6e6e" stroke-width="1.3"/></svg>
<svg style="left:192px;top:1012.7px;" width="18" height="14" viewBox="0 0 18 14"><path fill="#aeb9c2" d="M0 0H7L9.6 2.4H17.800V13.700H0z"/><circle cx="6.3" cy="7.8" r="2.7" fill="#fff"/></svg>
<span class="t" style="top:1008.0px;line-height:24px;font-size:17.3px;left:215px;color:#000;letter-spacing:-0.035px;">testMMS</span>
<svg style="left:168.0px;top:1036.7px;" width="16" height="16" viewBox="0 0 16 16"><path d="M5.800 3.200 10.600 8 5.800 12.800" fill="none" stroke="#6e6e6e" stroke-width="1.3"/></svg>
<svg style="left:192px;top:1037.7px;" width="18" height="14" viewBox="0 0 18 14"><path fill="#aeb9c2" d="M0 0H7L9.6 2.4H17.800V13.700H0z"/><circle cx="6.3" cy="7.8" r="2.7" fill="#fff"/></svg>
<span class="t" style="top:1033.0px;line-height:24px;font-size:17.3px;left:215px;color:#000;letter-spacing:-0.169px;">ui.theme</span>
<svg style="left:168.0px;top:1061.7px;" width="16" height="16" viewBox="0 0 16 16"><path d="M5.800 3.200 10.600 8 5.800 12.800" fill="none" stroke="#6e6e6e" stroke-width="1.3"/></svg>
<svg style="left:192px;top:1062.7px;" width="18" height="14" viewBox="0 0 18 14"><path fill="#aeb9c2" d="M0 0H7L9.6 2.4H17.800V13.700H0z"/><circle cx="6.3" cy="7.8" r="2.7" fill="#fff"/></svg>
<span class="t" style="top:1058.0px;line-height:24px;font-size:17.3px;left:215px;color:#000;letter-spacing:-0.917px;">WebRTC</span>
<svg style="left:123.0px;top:1086.7px;" width="16" height="16" viewBox="0 0 16 16"><path d="M3.2 5.200 8 10 12.800 5.200" fill="none" stroke="#6e6e6e" stroke-width="1.3"/></svg>
<svg style="left:147px;top:1087.7px;" width="20" height="18" viewBox="0 0 20 18"><path fill="#aeb9c2" d="M0 0H7L9.6 2.4H17.800V13.700H0z"/><path d="M10.500 8.500h7.500M10.500 10.700h7.500M10.500 12.900h7.500M10.500 15.100h7.500" stroke="#e2a53a" stroke-width="1.200"/><rect x="10" y="7.500" width="8.500" height="9" fill="none"/></svg>
<span class="t" style="top:1083.0px;line-height:24px;font-size:17.3px;left:170px;color:#000;letter-spacing:-0.344px;">res</span>
<svg style="left:145.0px;top:1111.7px;" width="16" height="16" viewBox="0 0 16 16"><path d="M5.800 3.200 10.600 8 5.800 12.800" fill="none" stroke="#6e6e6e" stroke-width="1.3"/></svg>
<svg style="left:170px;top:1112.7px;" width="18" height="14" viewBox="0 0 18 14"><path fill="#aeb9c2" d="M0 0H7L9.6 2.4H17.800V13.700H0z"/></svg>
<span class="t" style="top:1108.0px;line-height:24px;font-size:17.3px;left:193px;color:#000;letter-spacing:-0.026px;">drawable</span>
<div style="left:26px;top:1132px;width:451px;height:1px;background:#d1d1d1;"></div>
<span class="t" style="top:1138.0px;line-height:24px;font-size:17.3px;left:34px;color:#000;letter-spacing:-0.021px;">Structure</span>
<svg style="left:347px;top:1142px;" width="16" height="18" viewBox="0 0 16 18"><rect x="0.4" y="0.3" width="15.2" height="2.3" rx="0.6" fill="#7f7f7f"/><rect x="0.4" y="15.4" width="15.2" height="2.3" rx="0.6" fill="#7f7f7f"/><path d="M8 4.1l4.1 3.6H3.9zM8 13.9l4.100-3.600H3.900z" fill="#7f7f7f"/></svg>
<svg style="left:380px;top:1142px;" width="16" height="18" viewBox="0 0 16 18"><rect x="0.4" y="7.9" width="15.2" height="2.1" rx="0.6" fill="#7f7f7f"/><path d="M8 5.300l4-3.800H4zM8 12.600l4 4.100H4z" fill="#7f7f7f"/></svg>
<div style="left:408px;top:1139px;width:1px;height:24px;background:#cfcfcf;"></div>
<svg style="left:420.2px;top:1142.3px;" width="17" height="17" viewBox="0 0 24 24"><path fill="#7f7f7f" fill-rule="evenodd" stroke="#7f7f7f" stroke-width="1" stroke-linejoin="round" d="M9.31 3.73 L9.83 1.01 L14.17 1.01 L14.69 3.73 L17.82 5.53 L20.43 4.63 L22.60 8.38 L20.51 10.19 L20.51 13.81 L22.60 15.62 L20.43 19.37 L17.82 18.47 L14.69 20.27 L14.17 22.99 L9.83 22.99 L9.31 20.27 L6.18 18.47 L3.57 19.37 L1.40 15.62 L3.49 13.81 L3.49 10.19 L1.40 8.38 L3.57 4.63 L6.18 5.53Z M16.70 12.00 A4.7 4.7 0 1 0 7.30 12.00 A4.7 4.7 0 1 0 16.70 12.00Z"/></svg>
<svg style="left:453.0px;top:1143.0px;" width="16" height="16" viewBox="0 0 16 16"><rect x="0.5" y="7" width="15" height="2" rx="0.8" fill="#7f7f7f"/></svg>
<div style="left:170px;top:1171px;width:27px;height:28px;background:#cfcfcf;border-radius:3px;"></div>
<div style="left:203px;top:1171px;width:26px;height:28px;background:#cfcfcf;border-radius:3px;"></div>
<div style="left:341px;top:1171px;width:27px;height:28px;background:#cfcfcf;border-radius:3px;"></div>
<svg style="left:35.0px;top:1175.0px;" width="20" height="20" viewBox="0 0 16 16"><path d="M4 2v11M1 10l3 3.500L7 10" fill="none" stroke="#6e6e6e" stroke-width="1.600"/><rect x="9" y="9.500" width="5.500" height="5" fill="#db5860"/><path d="M10 9.500V8a1.700 1.700 0 0 1 3.400 0v1.500" fill="none" stroke="#db5860" stroke-width="1.200"/><rect x="9.500" y="3.500" width="5" height="4" fill="#59a869"/><path d="M9 3.500V2.500a1.500 1.500 0 0 1 3 0" fill="none" stroke="#59a869" stroke-width="1.100"/></svg>
<svg style="left:68.0px;top:1175.0px;" width="20" height="20" viewBox="0 0 16 16"><path d="M4 2v11M1 10l3 3.500L7 10" fill="none" stroke="#6e6e6e" stroke-width="1.600"/><text x="11.500" y="7.500" font-family="Liberation Sans, sans-serif" font-size="7.500" font-weight="bold" fill="#6e6e6e" text-anchor="middle">a</text><text x="11.500" y="14.500" font-family="Liberation Sans, sans-serif" font-size="7.500" font-weight="bold" fill="#6e6e6e" text-anchor="middle">z</text></svg>
<div style="left:98px;top:1173px;width:1px;height:24px;background:#cdcdcd;"></div>
<svg style="left:109.5px;top:1175.5px;" width="19" height="19" viewBox="0 0 16 16"><circle cx="7.500" cy="8.500" r="7" fill="#8fc97f"/><text x="7.500" y="12" font-family="Liberation Serif, serif" font-size="10" font-weight="bold" fill="#2d5a23" text-anchor="middle">I</text><path d="M13.500 7V1.500M11.500 3.500l2-2.200 2 2.200" fill="none" stroke="#8aa0b5" stroke-width="1.200"/></svg>
<svg style="left:142.0px;top:1176.0px;" width="18" height="18" viewBox="0 0 16 16"><circle cx="8" cy="8" r="7.600" fill="#c9b3ef"/><text x="8" y="11.200" font-family="Liberation Sans, sans-serif" font-size="10.500" fill="#5b3f93" text-anchor="middle">p</text></svg>
<svg style="left:175.0px;top:1176.0px;" width="18" height="18" viewBox="0 0 16 16"><circle cx="8" cy="8" r="7.600" fill="#eeb45f"/><text x="8" y="11.800" font-family="Liberation Sans, sans-serif" font-size="10.500" fill="#7a4b10" text-anchor="middle">f</text></svg>
<svg style="left:208.0px;top:1177.0px;" width="16" height="16" viewBox="0 0 16 16"><rect x="3.500" y="7" width="9" height="7" fill="#ef8752"/><path d="M5.500 7V5a2.500 2.500 0 0 1 5 0v2" fill="none" stroke="#ef8752" stroke-width="1.500"/></svg>
<svg style="left:239.0px;top:1176.0px;" width="18" height="18" viewBox="0 0 16 16"><path d="M3 2.500 8 8v2M13 2.500 8 8" fill="none" stroke="#6e6e6e" stroke-width="1.800"/><rect x="5.500" y="10" width="5" height="4.500" fill="#6e6e6e"/><path d="M1.500 1.500h3.500v3.500zM14.500 1.500H11v3.500z" fill="#6e6e6e"/></svg>
<svg style="left:272.0px;top:1176.0px;" width="18" height="18" viewBox="0 0 16 16"><circle cx="8" cy="8" r="5.700" fill="none" stroke="#7cc8e8" stroke-width="3.600"/></svg>
<svg style="left:305.0px;top:1176.0px;" width="18" height="18" viewBox="0 0 16 16"><circle cx="8" cy="8" r="7.600" fill="#f4afc0"/><text x="8" y="11.500" font-family="Liberation Sans, sans-serif" font-size="10.500" fill="#a0344e" text-anchor="middle">λ</text></svg>
<div style="left:334px;top:1173px;width:1px;height:24px;background:#cdcdcd;"></div>
<svg style="left:345.0px;top:1176.0px;" width="18" height="18" viewBox="0 0 16 16"><path d="M1.500 6V2.500h13V6" fill="none" stroke="#6e6e6e" stroke-width="1.500"/><path d="M8 14.500V6M4.500 9l3.500-3.500L11.500 9" fill="none" stroke="#6e6e6e" stroke-width="1.700"/></svg>
<svg style="left:379.0px;top:1176.0px;" width="18" height="18" viewBox="0 0 16 16"><path d="M1.500 5.500V2h13v3.500" fill="none" stroke="#6e6e6e" stroke-width="1.500"/><path d="M8 5v9M4.500 10.500 8 14l3.500-3.500" fill="none" stroke="#6e6e6e" stroke-width="1.700"/></svg>
<div style="left:26px;top:1202px;width:451px;height:1px;background:#d1d1d1;"></div>
<div style="left:26px;top:1203px;width:451px;height:77px;background:#fff;"></div>
<svg style="left:33.0px;top:1209.0px;" width="16" height="16" viewBox="0 0 16 16"><path d="M3.2 5.200 8 10 12.800 5.200" fill="none" stroke="#6e6e6e" stroke-width="1.3"/></svg>
<svg style="left:57.5px;top:1208.5px;" width="17" height="17" viewBox="0 0 16 16"><circle cx="8" cy="8" r="8" fill="#8bd0e8"/><text x="8" y="11.7" text-anchor="middle" font-family="Liberation Sans, sans-serif" font-size="13.6" font-weight="normal" fill="#3b5a6b">c</text></svg>
<svg style="left:78.5px;top:1209.5px;" width="13" height="13" viewBox="0 0 16 16"><rect x="4" y="8" width="9" height="6.5" fill="#7fc070"/><path d="M3 8V5.5a2.5 2.5 0 0 1 5 0V8" fill="none" stroke="#7fc070" stroke-width="1.6"/></svg>
<span class="t" style="top:1205.0px;line-height:24px;font-size:17.3px;left:100px;color:#000;letter-spacing:-0.201px;">RandomMessageItemAdapter</span>
<svg style="left:55.0px;top:1234.0px;" width="16" height="16" viewBox="0 0 16 16"><path d="M5.800 3.200 10.600 8 5.800 12.800" fill="none" stroke="#6e6e6e" stroke-width="1.3"/></svg>
<svg style="left:79.5px;top:1233.5px;" width="17" height="17" viewBox="0 0 16 16"><circle cx="8" cy="8" r="8" fill="#8bd0e8"/><text x="8" y="11.7" text-anchor="middle" font-family="Liberation Sans, sans-serif" font-size="13.6" font-weight="normal" fill="#3b5a6b">c</text></svg>
<svg style="left:101.5px;top:1234.5px;" width="13" height="13" viewBox="0 0 16 16"><rect x="4" y="8" width="9" height="6.5" fill="#7fc070"/><path d="M3 8V5.5a2.5 2.5 0 0 1 5 0V8" fill="none" stroke="#7fc070" stroke-width="1.6"/></svg>
<span class="t" style="top:1230.0px;line-height:24px;font-size:17.3px;left:123px;color:#000;letter-spacing:-0.115px;">ViewHolder</span>
<div class="clip" style="left:27px;top:1255px;width:450px;height:25px;">
<svg style="left:52.5px;top:3.5px;" width="17" height="17" viewBox="0 0 16 16"><circle cx="8" cy="8" r="8" fill="#f4afc0"/><text x="8" y="11.2" text-anchor="middle" font-family="Liberation Sans, sans-serif" font-size="10.5" font-weight="normal" fill="#a0344e">m</text></svg>
<svg style="left:74.5px;top:4.5px;" width="13" height="13" viewBox="0 0 16 16"><rect x="4" y="8" width="9" height="6.5" fill="#7fc070"/><path d="M3 8V5.5a2.5 2.5 0 0 1 5 0V8" fill="none" stroke="#7fc070" stroke-width="1.6"/></svg>
<span class="t" style="top:0.0px;line-height:24px;font-size:17.3px;left:96px;color:#000;letter-spacing:-0.118px;">RandomMessageItemAdapter</span>
<span class="t" style="top:0.0px;line-height:24px;font-size:17.3px;left:323px;color:#000;">(List&lt;RandomMessageItem&gt;)</span>
</div>
<div style="left:465px;top:1205px;width:12px;height:32px;background:#e6e6e6;"></div>
<div style="left:27px;top:1268px;width:334px;height:10px;background:rgba(0,0,0,0.11);"></div>
<div style="left:26px;top:1280px;width:2508px;height:1px;background:#d6d6d6;"></div>
<div style="left:478px;top:105px;width:1482px;height:1px;background:#d1d1d1;"></div>
<div class="clip" style="left:478px;top:73px;width:200px;height:32px;">
<span class="t" style="top:4.0px;line-height:24px;font-size:17.3px;left:-9.5px;color:#000;letter-spacing:0.352px;">ContactsAdapter.java</span>
</div>
<svg style="left:646.5px;top:82.0px;" width="15" height="15" viewBox="0 0 16 16"><path d="M4 4l8 8M12 4l-8 8" stroke="#adadad" stroke-width="1.2"/></svg>
<svg style="left:678.5px;top:80.5px;" width="17" height="17" viewBox="0 0 16 16"><circle cx="8" cy="8" r="8" fill="#8fcde6"/><text x="8" y="11.4" text-anchor="middle" font-family="Liberation Sans, sans-serif" font-size="9.5" font-weight="bold" fill="#2f5566">E</text></svg>
<span class="t" style="top:77.0px;line-height:24px;font-size:17.3px;left:704px;color:#000;letter-spacing:-0.284px;">MMSType.java</span>
<svg style="left:821.5px;top:82.0px;" width="15" height="15" viewBox="0 0 16 16"><path d="M4 4l8 8M12 4l-8 8" stroke="#adadad" stroke-width="1.2"/></svg>
<svg style="left:853.5px;top:80.5px;" width="17" height="17" viewBox="0 0 16 16"><circle cx="8" cy="8" r="8" fill="#8fcde6"/><text x="8" y="11.7" text-anchor="middle" font-family="Liberation Sans, sans-serif" font-size="13.6" font-weight="normal" fill="#2f5566">c</text></svg>
<span class="t" style="top:77.0px;line-height:24px;font-size:17.3px;left:879px;color:#000;letter-spacing:-0.123px;">MMSTestGenerator.java</span>
<svg style="left:1070.5px;top:82.0px;" width="15" height="15" viewBox="0 0 16 16"><path d="M4 4l8 8M12 4l-8 8" stroke="#adadad" stroke-width="1.2"/></svg>
<svg style="left:1101.5px;top:80.5px;" width="17" height="17" viewBox="0 0 16 16"><circle cx="8" cy="8" r="8" fill="#8fcde6"/><text x="8" y="11.7" text-anchor="middle" font-family="Liberation Sans, sans-serif" font-size="13.6" font-weight="normal" fill="#2f5566">c</text></svg>
<span class="t" style="top:77.0px;line-height:24px;font-size:17.3px;left:1128px;color:#000;letter-spacing:-0.113px;">DataGenerator.java</span>
<svg style="left:1282.5px;top:82.0px;" width="15" height="15" viewBox="0 0 16 16"><path d="M4 4l8 8M12 4l-8 8" stroke="#adadad" stroke-width="1.2"/></svg>
<svg style="left:1315.5px;top:80.5px;" width="17" height="17" viewBox="0 0 16 16"><circle cx="8" cy="8" r="8" fill="#8fcde6"/><text x="8" y="11.7" text-anchor="middle" font-family="Liberation Sans, sans-serif" font-size="13.6" font-weight="normal" fill="#2f5566">c</text></svg>
<span class="t" style="top:77.0px;line-height:24px;font-size:17.3px;left:1340px;color:#000;letter-spacing:-0.308px;">RandomMessageItem.java</span>
<svg style="left:1545.5px;top:82.0px;" width="15" height="15" viewBox="0 0 16 16"><path d="M4 4l8 8M12 4l-8 8" stroke="#adadad" stroke-width="1.2"/></svg>
<div style="left:1567px;top:72px;width:326px;height:33px;background:#fff;"></div>
<svg style="left:1579.5px;top:80.5px;" width="17" height="17" viewBox="0 0 16 16"><circle cx="8" cy="8" r="8" fill="#8fcde6"/><text x="8" y="11.7" text-anchor="middle" font-family="Liberation Sans, sans-serif" font-size="13.6" font-weight="normal" fill="#2f5566">c</text></svg>
<span class="t" style="top:77.0px;line-height:24px;font-size:17.3px;left:1604px;color:#000;letter-spacing:-0.152px;">RandomMessageItemAdapter.java</span>
<svg style="left:1871.5px;top:82.0px;" width="15" height="15" viewBox="0 0 16 16"><path d="M4 4l8 8M12 4l-8 8" stroke="#adadad" stroke-width="1.2"/></svg>
<div style="left:1567px;top:102px;width:326px;height:4px;background:#4083c9;"></div>
<svg style="left:1903.5px;top:80.5px;" width="17" height="17" viewBox="0 0 16 16"><path d="M3 5.300 8 10.300 13 5.300" fill="none" stroke="#6e6e6e" stroke-width="1.900"/></svg>
<div style="left:1942px;top:80.4px;width:4.200px;height:4.200px;border-radius:2.100px;background:#6e6e6e;"></div>
<div style="left:1942px;top:87.2px;width:4.200px;height:4.200px;border-radius:2.100px;background:#6e6e6e;"></div>
<div style="left:1942px;top:94.0px;width:4.200px;height:4.200px;border-radius:2.100px;background:#6e6e6e;"></div>
<div style="left:478px;top:106px;width:1482px;height:1174px;background:#fff;"></div>
<div style="left:478px;top:106px;width:73px;height:1174px;background:#f0f0f0;"></div>
<div style="left:551px;top:106px;width:1px;height:1174px;background:#d4d4d4;"></div>
<div style="left:1960px;top:73px;width:1px;height:1208px;background:#d1d1d1;"></div>
<div style="left:478px;top:189.0px;width:1482px;height:27.5px;background:#fffae3;"></div>
<div style="left:551px;top:189.0px;width:1px;height:27.5px;background:#d4d4d4;"></div>
<div style="left:1558px;top:106px;width:1px;height:1174px;background:#e3e3e3;"></div>
<div style="left:688px;top:189.0px;width:240px;height:27.5px;background:#5974ab;"></div>
<div style="left:1228px;top:189.0px;width:240px;height:27.5px;background:#e4e4ff;"></div>
<div style="left:628px;top:161.5px;width:30px;height:27.5px;background:#e9f5e6;"></div>
<div style="left:1218px;top:299.0px;width:30px;height:27.5px;background:#e9f5e6;"></div>
<div style="left:1438px;top:299.0px;width:20px;height:27.5px;background:#e9f5e6;"></div>
<div style="left:848px;top:739.0px;width:30px;height:27.5px;background:#e9f5e6;"></div>
<div style="left:1078px;top:739.0px;width:20px;height:27.5px;background:#e9f5e6;"></div>
<div style="left:596px;top:436.5px;width:1px;height:55px;background:#e1e1e1;"></div>
<div style="left:596px;top:601.5px;width:1px;height:55px;background:#e1e1e1;"></div>
<div style="left:596px;top:821.5px;width:1px;height:220px;background:#e1e1e1;"></div>
<div style="left:636px;top:931.5px;width:1px;height:82.5px;background:#e1e1e1;"></div>
<div class="ln" style="left:463px;top:107.5px;">1</div>
<div class="code" style="left:558px;top:107.5px;"><b>package</b> com.voipplus.mmsclient.randomData;</div>
<div class="ln" style="left:463px;top:135.0px;">2</div>
<div class="ln" style="left:463px;top:162.5px;">3</div>
<div class="code" style="left:558px;top:162.5px;"><b>import</b> <span style="color:#7a8a7a">...</span></div>
<div class="ln" style="left:463px;top:190.0px;">15</div>
<div class="code" style="left:558px;top:190.0px;"><b>public class</b> <span style="color:#fff">RandomMessageItemAdapter</span> <b>extends</b> RecyclerView.Adapter&lt;RandomMessageItemAdapter.ViewHolder&gt; {</div>
<div class="ln" style="left:463px;top:217.5px;">16</div>
<div class="ln" style="left:463px;top:245.0px;">17</div>
<div class="code" style="left:558px;top:245.0px;">    <b>private final</b> List&lt;RandomMessageItem&gt; <span class="f">items</span>;</div>
<div class="ln" style="left:463px;top:272.5px;">18</div>
<div class="ln" style="left:463px;top:300.0px;">19</div>
<div class="code" style="left:558px;top:300.0px;">    <b>public</b> RandomMessageItemAdapter(List&lt;RandomMessageItem&gt; items) <span style="color:#5f6f5f">{</span> <b>this</b>.<span class="f">items</span> = items; <span style="color:#5f6f5f">}</span></div>
<div class="ln" style="left:463px;top:327.5px;">22</div>
<div class="ln" style="left:463px;top:355.0px;">23</div>
<div class="code" style="left:558px;top:355.0px;">    <span class="a">@NonNull</span></div>
<div class="ln" style="left:463px;top:382.5px;">24</div>
<div class="code" style="left:558px;top:382.5px;">    <span class="a">@Override</span></div>
<div class="ln" style="left:463px;top:410.0px;">25</div>
<div class="code" style="left:558px;top:410.0px;">    <b>public</b> ViewHolder onCreateViewHolder(<span class="a">@NonNull</span> ViewGroup parent, <b>int</b> viewType) {</div>
<div class="ln" style="left:463px;top:437.5px;">26</div>
<div class="code" style="left:558px;top:437.5px;">        View view = LayoutInflater.<i>from</i>(parent.getContext()).inflate(R.layout.<i class="s">item_layout</i>, parent, </div>
<div class="ln" style="left:463px;top:465.0px;">27</div>
<div class="code" style="left:558px;top:465.0px;">        <b>return new</b> ViewHolder(view);</div>
<div class="ln" style="left:463px;top:492.5px;">28</div>
<div class="code" style="left:558px;top:492.5px;">    }</div>
<div class="ln" style="left:463px;top:520.0px;">29</div>
<div class="ln" style="left:463px;top:547.5px;">30</div>
<div class="code" style="left:558px;top:547.5px;">    <span class="a">@Override</span></div>
<div class="ln" style="left:463px;top:575.0px;">31</div>
<div class="code" style="left:558px;top:575.0px;">    <b>public void</b> onBindViewHolder(<span class="a">@NonNull</span> ViewHolder holder, <b>int</b> position) {RandomMessageItem item = <span class="f">items</span>.get(position);</div>
<div class="ln" style="left:463px;top:602.5px;">32</div>
<div class="code" style="left:558px;top:602.5px;">        holder.<span class="f">iconView</span>.setImageResource(item.getIcon());</div>
<div class="ln" style="left:463px;top:630.0px;">33</div>
<div class="code" style="left:558px;top:630.0px;">        holder.<span class="f">textView</span>.setText(item.getText());</div>
<div class="ln" style="left:463px;top:657.5px;">34</div>
<div class="code" style="left:558px;top:657.5px;">    }</div>
<div class="ln" style="left:463px;top:685.0px;">35</div>
<div class="ln" style="left:463px;top:712.5px;">36</div>
<div class="code" style="left:558px;top:712.5px;">    <span class="a">@Override</span></div>
<div class="ln" style="left:463px;top:740.0px;">37</div>
<div class="code" style="left:558px;top:740.0px;">    <b>public int</b> getItemCount() <span style="color:#5f6f5f">{</span> <b>return</b> <span class="f">items</span>.size(); <span style="color:#5f6f5f">}</span></div>
<div class="ln" style="left:463px;top:767.5px;">40</div>
<div class="ln" style="left:463px;top:795.0px;">41</div>
<div class="code" style="left:558px;top:795.0px;">    <b>public static class</b> ViewHolder <b>extends</b> RecyclerView.ViewHolder {</div>
<div class="ln" style="left:463px;top:822.5px;">42</div>
<div class="code" style="left:558px;top:822.5px;">        <b>public final</b> ImageView <span class="f">iconView</span>;</div>
<div class="ln" style="left:463px;top:850.0px;">43</div>
<div class="code" style="left:558px;top:850.0px;">        <b>public final</b> TextView <span class="f">textView</span>;</div>
<div class="ln" style="left:463px;top:877.5px;">44</div>
<div class="ln" style="left:463px;top:905.0px;">45</div>
<div class="code" style="left:558px;top:905.0px;">        <b>public</b> ViewHolder(<span class="a">@NonNull</span> View itemView) {</div>
<div class="ln" style="left:463px;top:932.5px;">46</div>
<div class="code" style="left:558px;top:932.5px;">            <b>super</b>(itemView);</div>
<div class="ln" style="left:463px;top:960.0px;">47</div>
<div class="code" style="left:558px;top:960.0px;">            <span class="f">iconView</span> = itemView.findViewById(R.id.<i class="s">icon</i>);</div>
<div class="ln" style="left:463px;top:987.5px;">48</div>
<div class="code" style="left:558px;top:987.5px;">            <span class="f">textView</span> = itemView.findViewById(R.id.<i class="s">text</i>);</div>
<div class="ln" style="left:463px;top:1015.0px;">49</div>
<div class="code" style="left:558px;top:1015.0px;">        }</div>
<div class="ln" style="left:463px;top:1042.5px;">50</div>
<div class="code" style="left:558px;top:1042.5px;">    }</div>
<div class="ln" style="left:463px;top:1070.0px;">51</div>
<div class="code" style="left:558px;top:1070.0px;">}</div>
<div class="code" style="left:1664px;top:437.5px;"><b>false</b>);</div>
<div style="left:1551px;top:439.5px;width:110px;height:22px;border-radius:4px;background:#ededed;"></div>
<span class="t" style="top:438.5px;line-height:24px;font-size:15.3px;left:1557px;color:#8c8c8c;letter-spacing:0.276px;">attachToRoot:</span>
<span class="t" style="top:192.0px;line-height:24px;font-size:15.6px;left:1624px;color:#8c8c8c;letter-spacing:-0.039px;">5 usages</span>
<svg style="left:1703.5px;top:197.5px;" width="13" height="13" viewBox="0 0 16 16"><circle cx="8" cy="5.5" r="2.6" fill="#a9b3ba"/><path d="M2.5 13.5c0-3 2.5-4.2 5.5-4.2s5.5 1.2 5.5 4.2z" fill="#a9b3ba"/></svg>
<span class="t" style="top:192.0px;line-height:24px;font-size:15.6px;left:1721px;color:#8c8c8c;letter-spacing:-0.419px;">Razen</span>
<span class="t" style="top:247.0px;line-height:24px;font-size:15.6px;left:1054px;color:#8c8c8c;letter-spacing:0.086px;">3 usages</span>
<svg style="left:693.5px;top:362.5px;" width="13" height="13" viewBox="0 0 16 16"><circle cx="8" cy="5.5" r="2.6" fill="#a9b3ba"/><path d="M2.5 13.5c0-3 2.5-4.2 5.5-4.2s5.5 1.2 5.5 4.2z" fill="#a9b3ba"/></svg>
<span class="t" style="top:357.0px;line-height:24px;font-size:15.6px;left:712px;color:#8c8c8c;letter-spacing:-0.419px;">Razen</span>
<svg style="left:702.5px;top:555.0px;" width="13" height="13" viewBox="0 0 16 16"><circle cx="8" cy="5.5" r="2.6" fill="#a9b3ba"/><path d="M2.5 13.5c0-3 2.5-4.2 5.5-4.2s5.5 1.2 5.5 4.2z" fill="#a9b3ba"/></svg>
<span class="t" style="top:549.5px;line-height:24px;font-size:15.6px;left:722px;color:#8c8c8c;letter-spacing:-0.419px;">Razen</span>
<svg style="left:702.5px;top:720.0px;" width="13" height="13" viewBox="0 0 16 16"><circle cx="8" cy="5.5" r="2.6" fill="#a9b3ba"/><path d="M2.5 13.5c0-3 2.5-4.2 5.5-4.2s5.5 1.2 5.5 4.2z" fill="#a9b3ba"/></svg>
<span class="t" style="top:714.5px;line-height:24px;font-size:15.6px;left:722px;color:#8c8c8c;letter-spacing:-0.419px;">Razen</span>
<span class="t" style="top:797.0px;line-height:24px;font-size:15.6px;left:1254px;color:#8c8c8c;letter-spacing:0.211px;">4 usages</span>
<svg style="left:1334.5px;top:802.5px;" width="13" height="13" viewBox="0 0 16 16"><circle cx="8" cy="5.5" r="2.6" fill="#a9b3ba"/><path d="M2.5 13.5c0-3 2.5-4.2 5.5-4.2s5.5 1.2 5.5 4.2z" fill="#a9b3ba"/></svg>
<span class="t" style="top:797.0px;line-height:24px;font-size:15.6px;left:1352px;color:#8c8c8c;letter-spacing:-0.419px;">Razen</span>
<span class="t" style="top:824.5px;line-height:24px;font-size:15.6px;left:974px;color:#8c8c8c;letter-spacing:0.086px;">2 usages</span>
<span class="t" style="top:852.0px;line-height:24px;font-size:15.6px;left:964px;color:#8c8c8c;letter-spacing:0.086px;">2 usages</span>
<span class="t" style="top:907.0px;line-height:24px;font-size:15.6px;left:1084px;color:#8c8c8c;letter-spacing:-0.359px;">1 usage</span>
<svg style="left:1153.5px;top:912.5px;" width="13" height="13" viewBox="0 0 16 16"><circle cx="8" cy="5.5" r="2.6" fill="#a9b3ba"/><path d="M2.5 13.5c0-3 2.5-4.2 5.5-4.2s5.5 1.2 5.5 4.2z" fill="#a9b3ba"/></svg>
<span class="t" style="top:907.0px;line-height:24px;font-size:15.6px;left:1171px;color:#8c8c8c;letter-spacing:-0.419px;">Razen</span>
<svg style="left:510.90000000000003px;top:416.6px;" width="11.4" height="11.4" viewBox="0 0 16 16"><circle cx="8" cy="8" r="8" fill="#8cc87c"/><text x="8" y="11.800" font-family="Liberation Serif, serif" font-size="10.500" font-weight="bold" fill="#3a4a36" text-anchor="middle">I</text></svg>
<svg style="left:520.5px;top:413.3px;" width="8" height="18" viewBox="0 0 8 18"><path d="M4 17.500V3" fill="none" stroke="#e05561" stroke-width="1.400"/><path d="M0.800 4.500 4 0.300 7.200 4.500z" fill="#e05561"/></svg>
<svg style="left:510.90000000000003px;top:581.5999999999999px;" width="11.4" height="11.4" viewBox="0 0 16 16"><circle cx="8" cy="8" r="8" fill="#8cc87c"/><text x="8" y="11.800" font-family="Liberation Serif, serif" font-size="10.500" font-weight="bold" fill="#3a4a36" text-anchor="middle">I</text></svg>
<svg style="left:520.5px;top:578.3px;" width="8" height="18" viewBox="0 0 8 18"><path d="M4 17.500V3" fill="none" stroke="#e05561" stroke-width="1.400"/><path d="M0.800 4.500 4 0.300 7.200 4.500z" fill="#e05561"/></svg>
<svg style="left:510.90000000000003px;top:746.5999999999999px;" width="11.4" height="11.4" viewBox="0 0 16 16"><circle cx="8" cy="8" r="8" fill="#8cc87c"/><text x="8" y="11.800" font-family="Liberation Serif, serif" font-size="10.500" font-weight="bold" fill="#3a4a36" text-anchor="middle">I</text></svg>
<svg style="left:520.5px;top:743.3px;" width="8" height="18" viewBox="0 0 8 18"><path d="M4 17.500V3" fill="none" stroke="#e05561" stroke-width="1.400"/><path d="M0.800 4.500 4 0.300 7.200 4.500z" fill="#e05561"/></svg>
<svg style="left:546px;top:170.3px;" width="12" height="12" viewBox="0 0 12 12"><rect x="0.500" y="0.500" width="10" height="10" fill="#fff" stroke="#c6c6c6"/><path d="M2.500 5.500h6M5.500 2.500v6" stroke="#c6c6c6" stroke-width="1"/></svg>
<svg style="left:546px;top:307.8px;" width="12" height="12" viewBox="0 0 12 12"><rect x="0.500" y="0.500" width="10" height="10" fill="#fff" stroke="#c6c6c6"/><path d="M2.500 5.500h6M5.500 2.500v6" stroke="#c6c6c6" stroke-width="1"/></svg>
<svg style="left:546px;top:747.8px;" width="12" height="12" viewBox="0 0 12 12"><rect x="0.500" y="0.500" width="10" height="10" fill="#fff" stroke="#c6c6c6"/><path d="M2.500 5.500h6M5.500 2.500v6" stroke="#c6c6c6" stroke-width="1"/></svg>
<svg style="left:546px;top:363.1px;" width="12" height="15" viewBox="0 0 12 15"><path d="M0.500 0.500h10v8l-5 5.300-5-5.300z" fill="#fff" stroke="#c6c6c6"/><path d="M2.500 5.300h6" stroke="#c6c6c6"/></svg>
<svg style="left:546px;top:418.1px;" width="12" height="15" viewBox="0 0 12 15"><path d="M0.500 0.500h10v8l-5 5.300-5-5.300z" fill="#fff" stroke="#c6c6c6"/><path d="M2.500 5.300h6" stroke="#c6c6c6"/></svg>
<svg style="left:546px;top:583.0999999999999px;" width="12" height="15" viewBox="0 0 12 15"><path d="M0.500 0.500h10v8l-5 5.300-5-5.300z" fill="#fff" stroke="#c6c6c6"/><path d="M2.500 5.300h6" stroke="#c6c6c6"/></svg>
<svg style="left:546px;top:803.0999999999999px;" width="12" height="15" viewBox="0 0 12 15"><path d="M0.500 0.500h10v8l-5 5.300-5-5.300z" fill="#fff" stroke="#c6c6c6"/><path d="M2.500 5.300h6" stroke="#c6c6c6"/></svg>
<svg style="left:546px;top:913.0999999999999px;" width="12" height="15" viewBox="0 0 12 15"><path d="M0.500 0.500h10v8l-5 5.300-5-5.300z" fill="#fff" stroke="#c6c6c6"/><path d="M2.500 5.300h6" stroke="#c6c6c6"/></svg>
<svg style="left:546px;top:386.3px;" width="12" height="15" viewBox="0 0 12 15"><path d="M0.500 14.200h10v-8.500l-5-5.200-5 5.200z" fill="#fff" stroke="#c6c6c6"/><path d="M2.500 9.500h6" stroke="#c6c6c6"/></svg>
<svg style="left:546px;top:496.3px;" width="12" height="15" viewBox="0 0 12 15"><path d="M0.500 14.200h10v-8.500l-5-5.200-5 5.200z" fill="#fff" stroke="#c6c6c6"/><path d="M2.500 9.500h6" stroke="#c6c6c6"/></svg>
<svg style="left:546px;top:661.3px;" width="12" height="15" viewBox="0 0 12 15"><path d="M0.500 14.200h10v-8.500l-5-5.200-5 5.200z" fill="#fff" stroke="#c6c6c6"/><path d="M2.500 9.500h6" stroke="#c6c6c6"/></svg>
<svg style="left:546px;top:1018.8px;" width="12" height="15" viewBox="0 0 12 15"><path d="M0.500 14.200h10v-8.500l-5-5.200-5 5.200z" fill="#fff" stroke="#c6c6c6"/><path d="M2.500 9.500h6" stroke="#c6c6c6"/></svg>
<svg style="left:546px;top:1046.3px;" width="12" height="15" viewBox="0 0 12 15"><path d="M0.500 14.200h10v-8.500l-5-5.200-5 5.200z" fill="#fff" stroke="#c6c6c6"/><path d="M2.500 9.500h6" stroke="#c6c6c6"/></svg>
<svg style="left:1935px;top:114px;" width="18" height="16" viewBox="0 0 18 16"><path d="M3 9l4 4L15 4.200" fill="none" stroke="#4ca35a" stroke-width="3.300"/></svg>
<div style="left:1943px;top:221px;width:16px;height:2px;background:#b9a3f5;"></div>
<span class="t" style="top:77.0px;line-height:24px;font-size:17.3px;left:1969px;color:#000;letter-spacing:-0.141px;">Device Manager</span>
<svg style="left:2476.5px;top:81.3px;" width="17" height="17" viewBox="0 0 24 24"><path fill="#7f7f7f" fill-rule="evenodd" stroke="#7f7f7f" stroke-width="1" stroke-linejoin="round" d="M9.31 3.73 L9.83 1.01 L14.17 1.01 L14.69 3.73 L17.82 5.53 L20.43 4.63 L22.60 8.38 L20.51 10.19 L20.51 13.81 L22.60 15.62 L20.43 19.37 L17.82 18.47 L14.69 20.27 L14.17 22.99 L9.83 22.99 L9.31 20.27 L6.18 18.47 L3.57 19.37 L1.40 15.62 L3.49 13.81 L3.49 10.19 L1.40 8.38 L3.57 4.63 L6.18 5.53Z M16.70 12.00 A4.7 4.7 0 1 0 7.30 12.00 A4.7 4.7 0 1 0 16.70 12.00Z"/></svg>
<svg style="left:2510.0px;top:82.0px;" width="16" height="16" viewBox="0 0 16 16"><rect x="0.5" y="7" width="15" height="2" rx="0.8" fill="#7f7f7f"/></svg>
<div style="left:1961px;top:105px;width:573px;height:1px;background:#d1d1d1;"></div>
<svg style="left:1973px;top:117px;" width="20" height="20" viewBox="0 0 20 20"><rect x="1" y="1" width="4.400" height="4.400" fill="#6e6e6e"/><rect x="8.200" y="1" width="4.600" height="4.400" fill="#6e6e6e"/><rect x="1" y="8.700" width="4.400" height="4.400" fill="#6e6e6e"/><path d="M8.200 8.700h4.600v3.300H8.200z" fill="#6e6e6e"/><path d="M10.700 14h7.300l-3.650 4.100z" fill="#4a4a4a"/></svg>
<div style="left:2000px;top:112px;width:1px;height:24px;background:#cdcdcd;"></div>
<svg style="left:2013px;top:116px;" width="22" height="22" viewBox="0 0 22 22"><path d="M8 2v12M2 8h12" stroke="#6e6e6e" stroke-width="2.100"/><path d="M13 15h7.200l-3.600 4.100z" fill="#4a4a4a"/></svg>
<svg style="left:2044px;top:113px;" width="20" height="22" viewBox="0 0 20 22"><path d="M1.800 7.500a11.500 11.500 0 0 1 16.400 0" fill="none" stroke="#6e6e6e" stroke-width="1.900"/><path d="M5.200 11a6.800 6.800 0 0 1 9.600 0" fill="none" stroke="#6e6e6e" stroke-width="1.900"/><path d="M10 12.500v7.500M6.200 16.200h7.600" stroke="#59a869" stroke-width="2.100"/></svg>
<svg style="left:2077px;top:113px;" width="18" height="22" viewBox="0 0 18 22"><path d="M1 17 4 1.500 8.500 8.500z" fill="#ffa000"/><path d="M1 17 9.500 3.500l2 4z" fill="#f57c00"/><path d="M1 17 13.500 4.500 16.500 17 9 21z" fill="#ffca28"/></svg>
<div style="left:1961px;top:141px;width:573px;height:1px;background:#d1d1d1;"></div>
<div style="left:1961px;top:142px;width:573px;height:135px;background:#fff;"></div>
<div style="left:1991px;top:144px;width:1px;height:27px;background:#d9d9d9;"></div>
<div style="left:2363px;top:144px;width:1px;height:27px;background:#d9d9d9;"></div>
<div style="left:2414px;top:144px;width:1px;height:27px;background:#d9d9d9;"></div>
<div style="left:2475px;top:144px;width:1px;height:27px;background:#d9d9d9;"></div>
<div style="left:1961px;top:172px;width:573px;height:1px;background:#e3e3e3;"></div>
<span class="t" style="top:146.0px;line-height:24px;font-size:17.3px;left:1995px;color:#000;letter-spacing:-0.537px;">Name</span>
<span class="t" style="top:146.0px;line-height:24px;font-size:17.3px;left:2366px;color:#000;letter-spacing:-0.962px;">API</span>
<span class="t" style="top:146.0px;line-height:24px;font-size:17.3px;left:2419px;color:#000;letter-spacing:-0.127px;">Type</span>
<div style="left:1961px;top:174px;width:573px;height:53px;background:#2675bf;"></div>
<div style="left:1971px;top:195px;width:10px;height:10px;border-radius:5px;background:#fff;"></div>
<svg style="left:1993.5px;top:191.0px;" width="20" height="20" viewBox="0 0 16 16"><rect x="2.500" y="2" width="8" height="11.500" rx="1.200" fill="none" stroke="#fff" stroke-width="1.300"/><rect x="8.500" y="9" width="6" height="4.500" fill="#2675bf" stroke="#fff" stroke-width="1.100"/></svg>
<span class="t" style="top:180.0px;line-height:24px;font-size:17.3px;left:2019px;color:#fff;letter-spacing:-0.136px;">Pixel 8 Pro API 33</span>
<span class="t" style="top:199.0px;line-height:24px;font-size:14.7px;left:2019px;color:#fff;letter-spacing:0.009px;">Android 13.0 (&quot;Tiramisu&quot;) | x86_64</span>
<span class="t" style="top:188.0px;line-height:24px;font-size:17.3px;left:2364px;color:#fff;letter-spacing:-0.122px;">33</span>
<span class="t" style="top:188.0px;line-height:24px;font-size:17.3px;left:2415px;color:#fff;letter-spacing:-0.247px;">Virtual</span>
<div style="left:2482px;top:194px;width:13px;height:13px;background:#fff;"></div>
<div style="left:2514.700px;top:190.3px;width:4px;height:4px;border-radius:2px;background:#fff;"></div>
<div style="left:2514.700px;top:197.3px;width:4px;height:4px;border-radius:2px;background:#fff;"></div>
<div style="left:2514.700px;top:204.3px;width:4px;height:4px;border-radius:2px;background:#fff;"></div>
<div style="left:1961px;top:277px;width:573px;height:2px;background:#d1d1d1;"></div>
<span class="t" style="top:283.0px;line-height:24px;font-size:17.3px;left:1969px;color:#000;letter-spacing:-0.162px;">Running Devices:</span>
<svg style="left:2126.0px;top:285.0px;" width="20" height="20" viewBox="0 0 16 16"><rect x="2.500" y="1.500" width="8" height="12" rx="1.200" fill="#f2f2f2" stroke="#9aa4ae" stroke-width="1.200"/><rect x="8.500" y="9" width="5" height="5" fill="#8f5fd0"/><circle cx="12.500" cy="13" r="2.300" fill="#2fc033"/></svg>
<span class="t" style="top:283.0px;line-height:24px;font-size:17.3px;left:2150px;color:#000;letter-spacing:-0.136px;">Pixel 8 Pro API 33</span>
<svg style="left:2293.5px;top:288.5px;" width="15" height="15" viewBox="0 0 16 16"><path d="M4 4l8 8M12 4l-8 8" stroke="#adadad" stroke-width="1.2"/></svg>
<div style="left:2111px;top:308px;width:209px;height:4px;border-radius:2px;background:#a3acc3;"></div>
<svg style="left:2328.0px;top:287.5px;" width="16" height="16" viewBox="0 0 16 16"><path d="M8 1.300v13.400M1.300 8h13.400" stroke="#6e6e6e" stroke-width="2"/></svg>
<svg style="left:2435.0px;top:286.0px;" width="18" height="18" viewBox="0 0 16 16"><rect x="1.500" y="2" width="13" height="12" fill="none" stroke="#6e6e6e" stroke-width="1.400"/><rect x="1.500" y="2" width="13" height="3.500" fill="#6e6e6e"/></svg>
<div style="left:2464px;top:283px;width:1px;height:24px;background:#cdcdcd;"></div>
<svg style="left:2476.5px;top:287.3px;" width="17" height="17" viewBox="0 0 24 24"><path fill="#7f7f7f" fill-rule="evenodd" stroke="#7f7f7f" stroke-width="1" stroke-linejoin="round" d="M9.31 3.73 L9.83 1.01 L14.17 1.01 L14.69 3.73 L17.82 5.53 L20.43 4.63 L22.60 8.38 L20.51 10.19 L20.51 13.81 L22.60 15.62 L20.43 19.37 L17.82 18.47 L14.69 20.27 L14.17 22.99 L9.83 22.99 L9.31 20.27 L6.18 18.47 L3.57 19.37 L1.40 15.62 L3.49 13.81 L3.49 10.19 L1.40 8.38 L3.57 4.63 L6.18 5.53Z M16.70 12.00 A4.7 4.7 0 1 0 7.30 12.00 A4.7 4.7 0 1 0 16.70 12.00Z"/></svg>
<svg style="left:2510.0px;top:288.0px;" width="16" height="16" viewBox="0 0 16 16"><rect x="0.5" y="7" width="15" height="2" rx="0.8" fill="#7f7f7f"/></svg>
<svg style="left:1971.0px;top:321.0px;" width="18" height="18" viewBox="0 0 16 16"><path d="M4.300 4a6 6 0 1 0 7.400 0" fill="none" stroke="#6e6e6e" stroke-width="2.100"/><path d="M8 1v6.800" stroke="#6e6e6e" stroke-width="2.100"/></svg>
<svg style="left:2004.0px;top:321.0px;" width="18" height="18" viewBox="0 0 16 16"><path d="M1 5.500h3l4-3.500v12l-4-3.500H1z" fill="#6e6e6e"/><path d="M10.500 5a4 4 0 0 1 0 6M12.500 3a7 7 0 0 1 0 10" fill="none" stroke="#6e6e6e" stroke-width="1.400"/></svg>
<svg style="left:2036.0px;top:321.0px;" width="18" height="18" viewBox="0 0 16 16"><path d="M2 5.500h3l4-3.500v12l-4-3.500H2z" fill="#6e6e6e"/><path d="M11.500 5.500a3.500 3.500 0 0 1 0 5" fill="none" stroke="#6e6e6e" stroke-width="1.400"/></svg>
<div style="left:2065px;top:318px;width:1px;height:24px;background:#cdcdcd;"></div>
<svg style="left:2075.0px;top:320.0px;" width="20" height="20" viewBox="0 0 16 16"><rect x="2" y="3" width="7" height="11" rx="1" fill="none" stroke="#6e6e6e" stroke-width="1.400"/><path d="M11.500 2.500a6 6 0 0 1 1 9" fill="none" stroke="#389fd6" stroke-width="1.600"/><path d="M10.500 10.500l1.800 2.500 2.200-2z" fill="#389fd6"/></svg>
<svg style="left:2109.0px;top:320.0px;" width="20" height="20" viewBox="0 0 16 16"><rect x="7" y="3" width="7" height="11" rx="1" fill="none" stroke="#6e6e6e" stroke-width="1.400"/><path d="M4.500 2.500a6 6 0 0 0-1 9" fill="none" stroke="#389fd6" stroke-width="1.600"/><path d="M5.500 10.500l-1.800 2.500-2.200-2z" fill="#389fd6"/></svg>
<div style="left:2139px;top:318px;width:1px;height:24px;background:#cdcdcd;"></div>
<svg style="left:2152.0px;top:322.0px;" width="16" height="16" viewBox="0 0 16 16"><path d="M12 2.500v11L3 8z" fill="#6e6e6e"/></svg>
<div style="left:2188px;top:325px;width:10px;height:10px;border-radius:5px;background:#6e6e6e;"></div>
<div style="left:2220px;top:325px;width:10px;height:10px;background:#6e6e6e;"></div>
<div style="left:2245px;top:318px;width:1px;height:24px;background:#cdcdcd;"></div>
<svg style="left:2256.0px;top:320.0px;" width="20" height="20" viewBox="0 0 16 16"><path d="M1 4.500h3.500l1.500-2h4l1.500 2H15v9.500H1z" fill="#6e6e6e"/><circle cx="8" cy="9" r="2.700" fill="#f2f2f2"/><circle cx="8" cy="9" r="1.500" fill="#6e6e6e"/></svg>
<span class="t" style="top:317.0px;line-height:24px;font-size:15px;left:2296px;color:#6e6e6e;">»</span>
<svg style="left:2323.0px;top:318.0px;" width="18" height="18" viewBox="0 0 16 16"><path d="M1.500 9.500v-8h10" fill="none" stroke="#6e6e6e" stroke-width="1.200"/><rect x="4" y="4" width="10" height="7.500" fill="none" stroke="#6e6e6e" stroke-width="1.200"/><circle cx="10" cy="10" r="2.800" fill="#f2f2f2" stroke="#6e6e6e" stroke-width="1.300"/><path d="M12 12l3 3" stroke="#6e6e6e" stroke-width="1.500"/></svg>
<div style="left:2353px;top:318px;width:1px;height:24px;background:#cdcdcd;"></div>
<svg style="left:2366.0px;top:322.0px;" width="18" height="18" viewBox="0 0 16 16"><path d="M8 1 15.500 15H0.500z" fill="#f4a83a"/><path d="M8 6v4.500M8 12v1.800" stroke="#fff" stroke-width="1.700"/></svg>
<span class="t" style="top:318.0px;line-height:24px;font-size:17.3px;left:2388px;color:#000;letter-spacing:-0.034px;">Live Edit disabled</span>
<div style="left:1961px;top:347px;width:573px;height:1px;background:#d1d1d1;"></div>
<div style="left:2029px;top:351px;width:434px;height:927px;border-radius:43px 43px 48px 48px / 46px 46px 50px 50px;background:#000;box-shadow:0 0 1.500px #666,inset 0 0 0 1px #a8a8a8,inset 0 0 0 2px #6e6e6e,inset 0 0 0 3.500px #3c3c3c,inset 0 0 0 4.500px #777,inset 0 0 0 6px #262626,inset 0 0 0 7px #101010;"></div>
<div style="left:2463px;top:645px;width:4px;height:58px;background:#555;"></div>
<div style="left:2463px;top:752px;width:4px;height:108px;background:#555;"></div>
<div class="clip" style="left:2045px;top:366px;width:402px;height:897px;border-radius:28px 28px 26px 26px / 23px 23px 26px 26px;background:#fafafa;font-family:'Liberation Sans',sans-serif;">
<div style="left:0px;top:22px;width:402px;height:50px;background:#212121;"></div>
<span class="t" style="top:-1.0px;line-height:24px;font-size:12.3px;left:8px;color:#555;letter-spacing:0.044px;">10:09</span>
<svg style="left:44.25px;top:5.25px;" width="11.5" height="11.5" viewBox="0 0 24 24"><path fill="#5a5a5a" fill-rule="evenodd" stroke="#5a5a5a" stroke-width="1" stroke-linejoin="round" d="M9.31 3.73 L9.83 1.01 L14.17 1.01 L14.69 3.73 L17.82 5.53 L20.43 4.63 L22.60 8.38 L20.51 10.19 L20.51 13.81 L22.60 15.62 L20.43 19.37 L17.82 18.47 L14.69 20.27 L14.17 22.99 L9.83 22.99 L9.31 20.27 L6.18 18.47 L3.57 19.37 L1.40 15.62 L3.49 13.81 L3.49 10.19 L1.40 8.38 L3.57 4.63 L6.18 5.53Z M16.70 12.00 A4.7 4.7 0 1 0 7.30 12.00 A4.7 4.7 0 1 0 16.70 12.00Z"/></svg>
<svg style="left:64.0px;top:5.0px;" width="12" height="12" viewBox="0 0 16 16"><path d="M8 1l6 2.200v4.500c0 3.800-2.500 6.300-6 7.300-3.500-1-6-3.500-6-7.300V3.200z" fill="#555"/><path d="M6.500 5v6l4.500-3z" fill="#fafafa"/></svg>
<svg style="left:84.0px;top:5.0px;" width="12" height="12" viewBox="0 0 16 16"><path d="M3 5.500 7 1.500h6v13H3z" fill="#555"/><path d="M7.500 3v3M9.500 3v3M11.500 3v3" stroke="#fafafa" stroke-width="0.900"/></svg>
<svg style="left:337.5px;top:4.5px;" width="13" height="13" viewBox="0 0 16 16"><path d="M8 14 0.500 5a10.500 10.500 0 0 1 15 0z" fill="#555"/></svg>
<svg style="left:353.0px;top:5.0px;" width="12" height="12" viewBox="0 0 16 16"><path d="M14.500 1.500v13h-13z" fill="#555"/></svg>
<span class="t" style="top:36.0px;line-height:24px;font-size:18.6px;left:15px;color:#fff;letter-spacing:-0.284px;-webkit-text-stroke:0.300px #fff;">VoipPLUS Notification</span>
<svg style="left:14.800000000000182px;top:87.5px;" width="19" height="19" viewBox="0 0 16 16"><path d="M3 1h7l4 4v10H3z" fill="#ff7a00"/><path d="M10 1v4h4z" fill="#ffb46a"/><path d="M8.700 6.500v5.200M8.700 6.500h2.300v1.600H8.700" stroke="#fff" stroke-width="1.200" fill="none"/><circle cx="7.600" cy="11.700" r="1.500" fill="#fff"/></svg>
<span class="t" style="top:85.0px;line-height:24px;font-size:14.6px;left:50px;color:#757575;letter-spacing:-0.158px;">message 7</span>
<svg style="left:14.800000000000182px;top:137.5px;" width="19" height="19" viewBox="0 0 16 16"><path d="M3 1h7l4 4v10H3z" fill="#ff7a00"/><path d="M10 1v4h4z" fill="#ffb46a"/><path d="M8.700 6.500v5.200M8.700 6.500h2.300v1.600H8.700" stroke="#fff" stroke-width="1.200" fill="none"/><circle cx="7.600" cy="11.700" r="1.500" fill="#fff"/></svg>
<span class="t" style="top:135.0px;line-height:24px;font-size:14.6px;left:50px;color:#757575;letter-spacing:-0.158px;">message 3</span>
<svg style="left:14.800000000000182px;top:188.5px;" width="19" height="19" viewBox="0 0 16 16"><path d="M2 3.500 3.500 1.500h9L14 3.500V14.500H2z" fill="#ff7a00"/><path d="M2.500 3.500h11" stroke="#fff" stroke-width="1"/><path d="M8 12.500 4.500 8.500h2.300V6.500h2.400v2h2.300z" fill="#fff"/></svg>
<span class="t" style="top:186.0px;line-height:24px;font-size:14.6px;left:50px;color:#757575;letter-spacing:-0.158px;">message 3</span>
<svg style="left:14.800000000000182px;top:238.5px;" width="19" height="19" viewBox="0 0 16 16"><path d="M2 3.500 3.500 1.500h9L14 3.500V14.500H2z" fill="#ff7a00"/><path d="M2.500 3.500h11" stroke="#fff" stroke-width="1"/><path d="M8 12.500 4.500 8.500h2.300V6.500h2.400v2h2.300z" fill="#fff"/></svg>
<span class="t" style="top:236.0px;line-height:24px;font-size:14.6px;left:50px;color:#757575;letter-spacing:-0.154px;">message 10</span>
<svg style="left:14.800000000000182px;top:288.5px;" width="19" height="19" viewBox="0 0 16 16"><path d="M3 1h7l4 4v10H3z" fill="#ff7a00"/><path d="M10 1v4h4z" fill="#ffb46a"/><path d="M8.700 6.500v5.200M8.700 6.500h2.300v1.600H8.700" stroke="#fff" stroke-width="1.200" fill="none"/><circle cx="7.600" cy="11.700" r="1.500" fill="#fff"/></svg>
<span class="t" style="top:286.0px;line-height:24px;font-size:14.6px;left:50px;color:#757575;letter-spacing:-0.158px;">message 8</span>
<div style="left:0px;top:832px;width:402px;height:43px;background:#e7e3ea;"></div>
<div style="left:100px;top:874px;width:101px;height:1.2px;background:#1f8f85;"></div>
<svg style="left:39.0px;top:843.0px;" width="22" height="22" viewBox="0 0 24 24"><path d="M6.600 10.800c1.400 2.800 3.800 5.100 6.600 6.600l2.200-2.200c.3-.3.700-.400 1-.200 1.100.400 2.300.600 3.600.600.600 0 1 .400 1 1V20c0 .600-.400 1-1 1C10.600 21 3 13.400 3 4c0-.600.400-1 1-1h3.500c.600 0 1 .400 1 1 0 1.300.200 2.500.600 3.600.100.300 0 .700-.200 1z" fill="#ff7a00"/></svg>
<svg style="left:140.0px;top:843.0px;" width="22" height="22" viewBox="0 0 24 24"><path d="M15 12c2.200 0 4-1.800 4-4s-1.800-4-4-4-4 1.800-4 4 1.800 4 4 4zm-9-2V7H4v3H1v2h3v3h2v-3h3v-2zm9 4c-2.700 0-8 1.300-8 4v2h16v-2c0-2.700-5.300-4-8-4z" fill="#ff7a00"/></svg>
<svg style="left:240.0px;top:843.0px;" width="22" height="22" viewBox="0 0 24 24"><path d="M13 3a9 9 0 0 0-9 9H1l3.900 3.900.100.100L9 12H6c0-3.900 3.100-7 7-7s7 3.100 7 7-3.100 7-7 7c-1.900 0-3.700-.800-4.900-2.100l-1.400 1.400A9 9 0 1 0 13 3zm-1 5v5l4.300 2.500.700-1.200-3.500-2.100V8z" fill="#ff7a00"/></svg>
<svg style="left:343.75px;top:845.75px;" width="16.5" height="16.5" viewBox="0 0 16 16"><rect x="0" y="0" width="16" height="16" rx="1" fill="#ff7a00"/><g transform="translate(2.600 2.600) scale(0.450)"><path fill="#fff" fill-rule="evenodd" stroke="#fff" stroke-width="1" stroke-linejoin="round" d="M9.31 3.73 L9.83 1.01 L14.17 1.01 L14.69 3.73 L17.82 5.53 L20.43 4.63 L22.60 8.38 L20.51 10.19 L20.51 13.81 L22.60 15.62 L20.43 19.37 L17.82 18.47 L14.69 20.27 L14.17 22.99 L9.83 22.99 L9.31 20.27 L6.18 18.47 L3.57 19.37 L1.40 15.62 L3.49 13.81 L3.49 10.19 L1.40 8.38 L3.57 4.63 L6.18 5.53Z M16.70 12.00 A4.7 4.7 0 1 0 7.30 12.00 A4.7 4.7 0 1 0 16.70 12.00Z"/></g></svg>
<div style="left:153px;top:884px;width:96px;height:4px;border-radius:2px;background:#5a5a5a;"></div>
</div>
<div style="left:2234px;top:376px;width:24px;height:24px;border-radius:12px;background:radial-gradient(circle at 50% 50%,#3b2a55 0,#111 30%,#000 60%);"></div>
<svg style="left:2101px;top:673.5px;" width="16" height="26" viewBox="0 0 16 26"><path d="M1.500 1.500v19l4.500-4 3 7 2.500-1-3-7h6z" fill="#fff" stroke="#111" stroke-width="1.200"/></svg>
<div style="left:2478px;top:1120px;width:33px;height:133px;border-radius:5px;background:#fff;border:1px solid #d1d1d1;box-sizing:border-box;"></div>
<svg style="left:2488.0px;top:1131.0px;" width="14" height="14" viewBox="0 0 16 16"><path d="M8 1.500v13M1.500 8h13" stroke="#6e6e6e" stroke-width="1.800"/></svg>
<div style="left:2489px;top:1169.5px;width:12px;height:1.5px;background:#c4c4c4;"></div>
<span class="t" style="top:1191.0px;line-height:24px;font-size:13px;left:2487px;color:#6e6e6e;font-weight:bold;letter-spacing:-0.930px;">1:1</span>
<svg style="left:2486.0px;top:1226.0px;" width="18" height="18" viewBox="0 0 16 16"><rect x="1" y="2.500" width="14" height="11" fill="none" stroke="#c4c4c4" stroke-width="1.300"/><path d="M4 8V5.500h2.500M12 8v2.500H9.500" fill="none" stroke="#c4c4c4" stroke-width="1.200"/></svg>
<div style="left:2534px;top:72px;width:1px;height:1255px;background:#d1d1d1;"></div>
<div style="left:2535px;top:162px;width:25px;height:158px;background:#bdbdbd;"></div>
<div style="left:2535px;top:1168px;width:25px;height:159px;background:#bdbdbd;"></div>
<svg style="left:2539.4px;top:82.0px;" width="16" height="16" viewBox="0 0 16 16"><path d="M8 0.500C8.600 5 11 7.400 15.500 8 11 8.600 8.600 11 8 15.500 7.400 11 5 8.600 0.500 8 5 7.400 7.400 5 8 0.500z" fill="#6e6e6e"/></svg>
<span class="t" style="left:2526.4px;top:118.0px;width:42px;height:20px;line-height:20px;font-size:14.7px;letter-spacing:-0.761px;color:#1a1a1a;transform:rotate(90deg);transform-origin:50% 50%;text-align:left;">Gemini</span>
<svg style="left:2538.9px;top:176.5px;" width="17" height="17" viewBox="0 0 16 16"><rect x="1.500" y="1.800" width="8.500" height="11.500" rx="1" fill="none" stroke="#6e6e6e" stroke-width="1.600"/><rect x="6.500" y="8.500" width="9.500" height="8" fill="#bdbdbd"/><path d="M7.500 15a4 4 0 0 1 8 0z" fill="#6e6e6e"/><path d="M8.500 9.500l1.200 2M14.500 9.500l-1.200 2" stroke="#6e6e6e" stroke-width="1"/></svg>
<span class="t" style="left:2495.4px;top:242.0px;width:104px;height:20px;line-height:20px;font-size:14.7px;letter-spacing:-0.217px;color:#1a1a1a;transform:rotate(90deg);transform-origin:50% 50%;text-align:left;">Device Manager</span>
<svg style="left:2538.9px;top:337.5px;" width="17" height="17" viewBox="0 0 16 16"><path d="M6.500 4H5a4 4 0 0 0 0 8h1.500M9.500 4H11a4 4 0 0 1 0 8H9.500" fill="none" stroke="#6e6e6e" stroke-width="1.900"/><path d="M5 8h6" stroke="#6e6e6e" stroke-width="1.900"/></svg>
<span class="t" style="left:2485.4px;top:412.0px;width:124px;height:20px;line-height:20px;font-size:14.7px;letter-spacing:-0.183px;color:#1a1a1a;transform:rotate(90deg);transform-origin:50% 50%;text-align:left;">App Links Assistant</span>
<svg style="left:2538.9px;top:511.5px;" width="17" height="17" viewBox="0 0 16 16"><path d="M1.500 12.500c0-5 3-7.500 7-7.500 1 0 2-2.500 4.500-2.500 1.500 0 2 1 2 2s-1 1.800-2 1.500c0 3-1 6.500-2 6.500h-1.500v-2.500c-1.500.8-3 .8-4 0v2.500z" fill="#6e6e6e"/></svg>
<span class="t" style="left:2525.9px;top:545.5px;width:43px;height:20px;line-height:20px;font-size:14.7px;letter-spacing:-0.187px;color:#1a1a1a;transform:rotate(90deg);transform-origin:50% 50%;text-align:left;">Gradle</span>
<svg style="left:2539.4px;top:603.0px;" width="16" height="16" viewBox="0 0 16 16"><path d="M8 2a4.500 4.500 0 0 0-4.500 4.500V10L2 12.500h12L12.500 10V6.500A4.500 4.500 0 0 0 8 2z" fill="#6e6e6e"/><rect x="6.500" y="13.500" width="3" height="1.500" fill="#6e6e6e"/><circle cx="13" cy="3" r="2.500" fill="#389fd6"/></svg>
<span class="t" style="left:2507.2px;top:654.2px;width:80.5px;height:20px;line-height:20px;font-size:14.7px;letter-spacing:0.033px;color:#1a1a1a;transform:rotate(90deg);transform-origin:50% 50%;text-align:left;">Notifications</span>
<svg style="left:2539.9px;top:732.5px;" width="15" height="15" viewBox="0 0 16 16"><path d="M3 2v12M6.500 3h7M6.500 8h5M6.500 13h7" stroke="#6e6e6e" stroke-width="1.700"/></svg>
<span class="t" style="left:2515.2px;top:776.8px;width:64.5px;height:20px;line-height:20px;font-size:14.7px;letter-spacing:-0.416px;color:#1a1a1a;transform:rotate(90deg);transform-origin:50% 50%;text-align:left;">EasyCode</span>
<svg style="left:2539.4px;top:919.0px;" width="16" height="16" viewBox="0 0 16 16"><path d="M8 1l6 2v5c0 3.500-2.500 6-6 7-3.500-1-6-3.500-6-7V3z" fill="#6e6e6e"/><path d="M8 3v10c2.500-1 4-2.800 4-5V4.300z" fill="#f2f2f2" opacity=".6"/></svg>
<span class="t" style="left:2515.9px;top:961.5px;width:63px;height:20px;line-height:20px;font-size:14.7px;letter-spacing:-0.093px;color:#1a1a1a;transform:rotate(90deg);transform-origin:50% 50%;text-align:left;">Coverage</span>
<svg style="left:2539.4px;top:1030.0px;" width="16" height="16" viewBox="0 0 16 16"><rect x="3" y="1.500" width="10" height="13" rx="1.500" fill="none" stroke="#6e6e6e" stroke-width="1.500"/><path d="M3 12h10" stroke="#6e6e6e" stroke-width="1.500"/></svg>
<span class="t" style="left:2497.7px;top:1091.8px;width:99.5px;height:20px;line-height:20px;font-size:14.7px;letter-spacing:-0.284px;color:#1a1a1a;transform:rotate(90deg);transform-origin:50% 50%;text-align:left;">Device Explorer</span>
<svg style="left:2539.4px;top:1182.0px;" width="16" height="16" viewBox="0 0 16 16"><rect x="2" y="2" width="8" height="11" rx="1" fill="none" stroke="#6e6e6e" stroke-width="1.400"/><rect x="8" y="9" width="5" height="4" fill="#bdbdbd" stroke="#6e6e6e" stroke-width="1"/><circle cx="13" cy="13" r="2.400" fill="#2fc033"/></svg>
<span class="t" style="left:2493.9px;top:1248.5px;width:107px;height:20px;line-height:20px;font-size:14.7px;letter-spacing:-0.275px;color:#1a1a1a;transform:rotate(90deg);transform-origin:50% 50%;text-align:left;">Running Devices</span>
<span class="t" style="top:1286.0px;line-height:24px;font-size:17.3px;left:34px;color:#000;letter-spacing:0.036px;">Logcat:</span>
<span class="t" style="top:1286.0px;line-height:24px;font-size:17.3px;left:115px;color:#000;letter-spacing:0.009px;">Logcat</span>
<svg style="left:172.5px;top:1291.5px;" width="15" height="15" viewBox="0 0 16 16"><path d="M4 4l8 8M12 4l-8 8" stroke="#adadad" stroke-width="1.2"/></svg>
<span class="t" style="top:1286.0px;line-height:24px;font-size:17.3px;left:215px;color:#000;letter-spacing:-0.317px;">com.voipplus.mmsclient (Pixel_8_Pro_API_33)</span>
<svg style="left:568.5px;top:1291.5px;" width="15" height="15" viewBox="0 0 16 16"><path d="M4 4l8 8M12 4l-8 8" stroke="#adadad" stroke-width="1.2"/></svg>
<svg style="left:603.0px;top:1290.5px;" width="16" height="16" viewBox="0 0 16 16"><path d="M8 1.300v13.400M1.300 8h13.400" stroke="#6e6e6e" stroke-width="2"/></svg>
<div style="left:200px;top:1311px;width:395px;height:4px;border-radius:2px;background:#a3acc3;"></div>
<svg style="left:2476.5px;top:1290.5px;" width="17" height="17" viewBox="0 0 24 24"><path fill="#7f7f7f" fill-rule="evenodd" stroke="#7f7f7f" stroke-width="1" stroke-linejoin="round" d="M9.31 3.73 L9.83 1.01 L14.17 1.01 L14.69 3.73 L17.82 5.53 L20.43 4.63 L22.60 8.38 L20.51 10.19 L20.51 13.81 L22.60 15.62 L20.43 19.37 L17.82 18.47 L14.69 20.27 L14.17 22.99 L9.83 22.99 L9.31 20.27 L6.18 18.47 L3.57 19.37 L1.40 15.62 L3.49 13.81 L3.49 10.19 L1.40 8.38 L3.57 4.63 L6.18 5.53Z M16.70 12.00 A4.7 4.7 0 1 0 7.30 12.00 A4.7 4.7 0 1 0 16.70 12.00Z"/></svg>
<svg style="left:2510.0px;top:1291.0px;" width="16" height="16" viewBox="0 0 16 16"><rect x="0.5" y="7" width="15" height="2" rx="0.8" fill="#7f7f7f"/></svg>
<div style="left:27px;top:1314px;width:2507px;height:1px;background:#d6d6d6;"></div>
<div style="left:0px;top:1326px;width:2560px;height:2px;background:#d1d1d1;"></div>
<div style="left:248px;top:1329px;width:91px;height:25px;background:#c9c9c9;"></div>
<div style="left:0px;top:1354px;width:2560px;height:1px;background:#d1d1d1;"></div>
<svg style="left:37.5px;top:1333.5px;" width="15" height="15" viewBox="0 0 16 16"><path d="M4.500 2v12M4.500 9.500c4.500 0 7-1.800 7-6" fill="none" stroke="#6e6e6e" stroke-width="2.100"/><circle cx="4.500" cy="2.300" r="1.900" fill="#6e6e6e"/><circle cx="11.500" cy="3.300" r="1.900" fill="#6e6e6e"/><circle cx="4.500" cy="13.700" r="1.900" fill="#6e6e6e"/></svg>
<span class="t" style="top:1329.0px;line-height:24px;font-size:14.7px;left:59px;color:#000;letter-spacing:-0.595px;">Git</span>
<svg style="left:99.5px;top:1333.5px;" width="15" height="15" viewBox="0 0 16 16"><path d="M1.800 1.800v12.400l10.500-6.200z" fill="#6e6e6e"/><circle cx="13.700" cy="14" r="2.900" fill="#1fd11f"/></svg>
<span class="t" style="top:1329.0px;line-height:24px;font-size:14.7px;left:120px;color:#000;letter-spacing:-0.656px;">Run</span>
<svg style="left:167.5px;top:1333.5px;" width="15" height="15" viewBox="0 0 16 16"><path d="M1.200 14a7 7 0 0 1 14 0" fill="none" stroke="#6e6e6e" stroke-width="2.700"/><path d="M8.500 14l3.500-5.500" stroke="#6e6e6e" stroke-width="2"/></svg>
<span class="t" style="top:1329.0px;line-height:24px;font-size:14.7px;left:189px;color:#000;letter-spacing:-0.196px;">Profiler</span>
<svg style="left:261.0px;top:1333.5px;" width="15" height="15" viewBox="0 0 16 16"><path d="M1 4h14M1 8.200h9M1 12.500h11.500" stroke="#6e6e6e" stroke-width="2.200"/></svg>
<span class="t" style="top:1329.0px;line-height:24px;font-size:14.7px;left:283px;color:#000;letter-spacing:0.144px;">Logcat</span>
<svg style="left:356.5px;top:1333.5px;" width="15" height="15" viewBox="0 0 16 16"><path d="M1 6 4.500 2h7L15 6 8 14.500z" fill="none" stroke="#6e6e6e" stroke-width="1.300"/><path d="M1 6h14M5.500 6 8 14M10.500 6 8 14M4.500 2l1 4M11.500 2l-1 4" fill="none" stroke="#6e6e6e" stroke-width="1"/></svg>
<span class="t" style="top:1329.0px;line-height:24px;font-size:14.7px;left:378px;color:#000;letter-spacing:-0.137px;">App Quality Insights</span>
<svg style="left:533.5px;top:1333.5px;" width="15" height="15" viewBox="0 0 16 16"><path d="M5 3.500h10M5 8h10M5 12.500h10" stroke="#6e6e6e" stroke-width="1.800"/><path d="M1 3.500h2.500M1 8h2.500M1 12.500h2.500" stroke="#6e6e6e" stroke-width="1.800"/></svg>
<span class="t" style="top:1329.0px;line-height:24px;font-size:14.7px;left:554px;color:#000;letter-spacing:-0.800px;">TODO</span>
<svg style="left:617.5px;top:1333.5px;" width="15" height="15" viewBox="0 0 16 16"><circle cx="8" cy="8" r="6.500" fill="#6e6e6e"/><path d="M8 4v5M8 10.500v1.800" stroke="#f2f2f2" stroke-width="1.800"/></svg>
<span class="t" style="top:1329.0px;line-height:24px;font-size:14.7px;left:639px;color:#000;letter-spacing:-0.136px;">Problems</span>
<svg style="left:726.5px;top:1333.5px;" width="15" height="15" viewBox="0 0 16 16"><rect x="1" y="2" width="14" height="12" fill="#6e6e6e"/><path d="M3.500 5.500 6 8l-2.500 2.500M7.500 11h4.500" fill="none" stroke="#f2f2f2" stroke-width="1.300"/></svg>
<span class="t" style="top:1329.0px;line-height:24px;font-size:14.7px;left:749px;color:#000;letter-spacing:-0.069px;">Terminal</span>
<svg style="left:830.5px;top:1333.5px;" width="15" height="15" viewBox="0 0 16 16"><path d="M5 1.500h6L15 8l-4 6.500H5L1 8z" fill="#6e6e6e"/><path d="M6.500 5v6L11 8z" fill="#f2f2f2"/></svg>
<span class="t" style="top:1329.0px;line-height:24px;font-size:14.7px;left:851px;color:#000;letter-spacing:-0.046px;">Services</span>
<svg style="left:935.5px;top:1333.5px;" width="15" height="15" viewBox="0 0 16 16"><rect x="4.500" y="2" width="7" height="9" rx="2" fill="#6e6e6e"/><path d="M2 5.500h12M8 11v3M4 14.500h8" stroke="#6e6e6e" stroke-width="1.500"/></svg>
<span class="t" style="top:1329.0px;line-height:24px;font-size:14.7px;left:956px;color:#000;letter-spacing:-0.090px;">App Inspection</span>
<svg style="left:14px;top:1359px;" width="18" height="18" viewBox="0 0 18 18"><rect x="5" y="2.500" width="11.500" height="10.500" fill="#f2f2f2" stroke="#6e6e6e" stroke-width="1.300"/><path d="M1.800 5.500V16h11" fill="none" stroke="#6e6e6e" stroke-width="1.300"/></svg>
<span class="t" style="top:1355.0px;line-height:24px;font-size:17.3px;left:49px;color:#000;letter-spacing:0.147px;">Install successfully finished in 202 ms. (today 19:50)</span>
<span class="t" style="top:1355.0px;line-height:24px;font-size:17.3px;left:2038px;color:#000;letter-spacing:-0.124px;">15:14 (24 chars)</span>
<span class="t" style="top:1355.0px;line-height:24px;font-size:17.3px;left:2178px;color:#000;letter-spacing:-1.294px;">CRLF</span>
<span class="t" style="top:1355.0px;line-height:24px;font-size:17.3px;left:2234px;color:#000;letter-spacing:-0.003px;">UTF-8</span>
<svg style="left:2297.0px;top:1359.0px;" width="16" height="16" viewBox="0 0 16 16"><path d="M1 2h13v9h-2.500v3L8 11H1z" fill="#6e6e6e"/><path d="M7.500 4v3.500M7.500 8.500v1.300" stroke="#f2f2f2" stroke-width="1.500"/></svg>
<svg style="left:2326.5px;top:1359.5px;" width="17" height="17" viewBox="0 0 16 16"><path d="M8 0.500C8.600 5 11 7.400 15.500 8 11 8.600 8.600 11 8 15.500 7.400 11 5 8.600 0.500 8 5 7.400 7.400 5 8 0.500z" fill="#5a607a"/></svg>
<span class="t" style="top:1355.0px;line-height:24px;font-size:17.3px;left:2358px;color:#000;letter-spacing:-0.030px;">4 spaces</span>
<svg style="left:2439.5px;top:1358.5px;" width="17" height="17" viewBox="0 0 16 16"><path d="M5 2v12M5 9c4 0 6-1.500 6-5" fill="none" stroke="#6e6e6e" stroke-width="1.700"/><circle cx="5" cy="2.500" r="1.800" fill="#6e6e6e"/><circle cx="11" cy="3.500" r="1.800" fill="#6e6e6e"/><circle cx="5" cy="13.500" r="1.800" fill="#6e6e6e"/></svg>
<span class="t" style="top:1355.0px;line-height:24px;font-size:17.3px;left:2464px;color:#000;letter-spacing:0.021px;">master</span>
<svg style="left:2528.0px;top:1359.0px;" width="16" height="16" viewBox="0 0 16 16"><rect x="5" y="8" width="9" height="6.500" fill="#6e6e6e"/><path d="M3.500 8V5.500a2.500 2.500 0 0 1 5 0V8" fill="none" stroke="#6e6e6e" stroke-width="1.500"/></svg>
<div style="left:0px;top:1380px;width:2560px;height:60px;background:#dfdfdf;"></div>
<div style="left:0px;top:1380px;width:2560px;height:1px;background:#bfbfbf;"></div>
<div style="left:1228px;top:1386px;width:48px;height:51px;border-radius:5px;background:#f3f3f3;border:1px solid #e9e9e9;box-sizing:border-box;"></div>
<svg style="left:24.0px;top:1394.0px;" width="32" height="32" viewBox="0 0 32 32"><rect x="1" y="1" width="14" height="14" fill="#1f9fe8"/><rect x="17" y="1" width="14" height="14" fill="#28a9ee"/><rect x="1" y="17" width="14" height="14" fill="#1288d8"/><rect x="17" y="17" width="14" height="14" fill="#1a93e0"/></svg>
<svg style="left:79.0px;top:1394.0px;" width="32" height="32" viewBox="0 0 32 32"><rect x="9" y="2" width="20" height="20" rx="2" fill="#f4f4f4"/><rect x="2" y="10" width="21" height="20" rx="2" fill="#222"/><rect x="9" y="10" width="14" height="12" fill="#aaa"/></svg>
<svg style="left:136.0px;top:1394.0px;" width="32" height="32" viewBox="0 0 32 32"><path d="M2 6a2 2 0 0 1 2-2h8l3 3h13a2 2 0 0 1 2 2v17a2 2 0 0 1-2 2H4a2 2 0 0 1-2-2z" fill="#f5b92b"/><path d="M2 11h28v15a2 2 0 0 1-2 2H4a2 2 0 0 1-2-2z" fill="#fcd354"/><rect x="9" y="22" width="14" height="6" rx="1" fill="#1f7fd6"/></svg>
<div style="left:148px;top:1431px;width:8px;height:3px;border-radius:1.500px;background:#777;"></div>
<svg style="left:190.0px;top:1394.0px;" width="32" height="32" viewBox="0 0 32 32"><circle cx="16" cy="16" r="14.500" fill="#d8d4cc" stroke="#8d8a84" stroke-width="1.500"/><circle cx="16" cy="16" r="11" fill="#f6f3ee" stroke="#b9b5ad"/><path d="M16 16 21 24" stroke="#c0392b" stroke-width="1.600"/><path d="M16 16 13 7" stroke="#555" stroke-width="1.200"/></svg>
<svg style="left:245.0px;top:1394.0px;" width="32" height="32" viewBox="0 0 32 32"><rect x="2" y="2" width="26" height="24" fill="#1787e0"/><circle cx="15" cy="13" r="7" fill="#8fd0fa" stroke="#e9f6ff" stroke-width="2"/><path d="M20 19l8 9" stroke="#1a6fc0" stroke-width="4"/></svg>
<svg style="left:300.0px;top:1394.0px;" width="32" height="32" viewBox="0 0 32 32"><circle cx="16" cy="17" r="13.500" fill="#ff8a16"/><path d="M4 12c1-6 7-10 12-9-2 1-2 3-1 4 5 0 9 4 9 9s-4 9-9 9-11-5-11-13z" fill="#ff5a2a"/><circle cx="16" cy="17" r="7" fill="#8c3fe0"/><path d="M20 2c5 3 9 8 9 15 0 7-6 13-13 13 6-2 9-8 7-14-1-4-1-8-3-14z" fill="#ffc328"/></svg>
<div style="left:312px;top:1431px;width:8px;height:3px;border-radius:1.500px;background:#777;"></div>
<svg style="left:355.0px;top:1394.0px;" width="32" height="32" viewBox="0 0 32 32"><path d="M22 2 30 6v20l-8 4-14-12-4 4-2-1V9l2-1 4 4z" fill="#8a55d6"/><path d="M22 9v14l-8-7z" fill="#e4d6f8"/><path d="M22 2 30 6v20l-8 4z" fill="#a77be6"/></svg>
<div style="left:367px;top:1431px;width:8px;height:3px;border-radius:1.500px;background:#777;"></div>
<svg style="left:410.0px;top:1394.0px;" width="32" height="32" viewBox="0 0 32 32"><ellipse cx="16" cy="18" rx="10" ry="7" fill="#f7a21b"/><circle cx="16" cy="18" r="4.500" fill="#fff"/><circle cx="16" cy="18" r="2.500" fill="#b5341f"/><path d="M4 8l5 6M28 8l-5 6M16 3v8M9 5l3 7M23 5l-3 7" stroke="#e98a10" stroke-width="2.400"/></svg>
<div style="left:422px;top:1431px;width:8px;height:3px;border-radius:1.500px;background:#777;"></div>
<svg style="left:465.0px;top:1394.0px;" width="32" height="32" viewBox="0 0 32 32"><path d="M23 2 30 5.500v21L23 30 8 17.500 3.500 21 2 20V12l1.500-1L8 14.500z" fill="#1f8ad2"/><path d="M23 9.500v13L14.500 16z" fill="#e9f3fb"/><path d="M23 2 30 5.500v21L23 30z" fill="#3ba4ea"/></svg>
<div style="left:477px;top:1431px;width:8px;height:3px;border-radius:1.500px;background:#777;"></div>
<svg style="left:521.0px;top:1394.0px;" width="32" height="32" viewBox="0 0 32 32"><rect x="1" y="1" width="30" height="30" fill="#c1121c"/><rect x="2.500" y="2.500" width="27" height="27" fill="none" stroke="#e88" stroke-dasharray="2 1.500"/><text x="16" y="24" font-family="Liberation Sans, sans-serif" font-size="22" font-weight="bold" font-style="italic" fill="#fff" text-anchor="middle">Fz</text></svg>
<svg style="left:576.0px;top:1394.0px;" width="32" height="32" viewBox="0 0 32 32"><circle cx="16" cy="16" r="12" fill="#b3141d"/><path d="M16 1v30M1 16h30M5.500 5.500l21 21M26.500 5.500l-21 21" stroke="#b3141d" stroke-width="5"/><text x="16" y="23" font-family="Liberation Sans, sans-serif" font-size="18" font-weight="bold" fill="#fff" text-anchor="middle">fz</text></svg>
<svg style="left:631.0px;top:1394.0px;" width="32" height="32" viewBox="0 0 32 32"><path d="M16 1c4 3 9 4 13 4v10c0 8-6 13-13 16C9 28 3 23 3 15V5c4 0 9-1 13-4z" fill="#1b86dd"/><path d="M16 1c4 3 9 4 13 4v10H16z" fill="#3ea2ee"/><path d="M3 15h13v16C9 28 3 23 3 15z" fill="#1670c4"/></svg>
<svg style="left:686.0px;top:1394.0px;" width="32" height="32" viewBox="0 0 32 32"><rect x="1" y="1" width="30" height="30" rx="3" fill="#2f6f9c"/><path d="M5 9c5-2 9 1 11 6s5 9 10 9c-3 1-6 0-8-2M8 7c2 4 3 8 8 12" fill="none" stroke="#e8f1f7" stroke-width="1.500"/><path d="M22 5l5 5" stroke="#fff" stroke-width="2.500"/></svg>
<div style="left:698px;top:1431px;width:8px;height:3px;border-radius:1.500px;background:#777;"></div>
<svg style="left:741.0px;top:1394.0px;" width="32" height="32" viewBox="0 0 32 32"><path d="M16 2c-6 0-12 3-12 10 0 5 3 8 5 9 1 4 2 9 5 9s3-3 3-6c2 0 4 0 5 1s3 2 4 0c-2 0-3-2-3-4 3-2 5-5 5-9C28 5 22 2 16 2z" fill="#3a6f9f"/><path d="M12 8c-3 0-5 2-5 5s2 6 4 7M20 7c3 0 5 3 5 6s-1 5-3 7M14 12c0 5 1 8 1 12" fill="none" stroke="#e9f0f6" stroke-width="1.300"/></svg>
<svg style="left:796.0px;top:1394.0px;" width="32" height="32" viewBox="0 0 32 32"><path d="M4 18c2-6 8-9 14-8l8-7-1 10c2 3 1 8-2 10l5 5-10-3c-6 1-12-2-14-7z" fill="#6b655c"/><circle cx="9" cy="15" r="3.500" fill="#fff"/><circle cx="15" cy="14" r="3.500" fill="#fff"/><circle cx="9.500" cy="15.500" r="1.500" fill="#111"/><circle cx="15" cy="14.500" r="1.500" fill="#111"/><ellipse cx="6" cy="20" rx="3.500" ry="2.500" fill="#222"/><path d="M18 22l11 6" stroke="#c9782a" stroke-width="2.500"/></svg>
<svg style="left:851.0px;top:1394.0px;" width="32" height="32" viewBox="0 0 32 32"><path d="M4 6v14c0 3 12 3 12 0V6z" fill="#ffd84a"/><ellipse cx="10" cy="6" rx="6" ry="2.500" fill="#ffe98a"/><path d="M22 2h7v7M2 23v7h7" fill="none" stroke="#3fae3f" stroke-width="2.200"/><path d="M15 17l12 12M27 17 15 29" stroke="#f07a12" stroke-width="3"/></svg>
<svg style="left:906.0px;top:1394.0px;" width="32" height="32" viewBox="0 0 32 32"><path d="M3 3h19l6 3v22l-22 2z" fill="#eee" stroke="#999"/><rect x="5" y="9" width="19" height="18" fill="#9ccc3c"/><path d="M8 15c3-4 9-4 12 0s-2 9-6 8" fill="none" stroke="#3d6b1c" stroke-width="1.500"/><path d="M29 2 21 19l-2 5 4-3 8-17z" fill="#e6b422" stroke="#8a6a10" stroke-width=".600"/></svg>
<svg style="left:961.0px;top:1394.0px;" width="32" height="32" viewBox="0 0 32 32"><path d="M5 1h16l6 6v22a2 2 0 0 1-2 2H5a2 2 0 0 1-2-2V3a2 2 0 0 1 2-2z" fill="#1fa73f"/><path d="M21 1l6 6h-6z" fill="#7be08f"/><path d="M7 14h14v11H7zM7 18h14M7 21.500h14M12 14v11M17 14v11" fill="none" stroke="#d6f5dc" stroke-width="1.200"/></svg>
<svg style="left:1016.0px;top:1394.0px;" width="32" height="32" viewBox="0 0 32 32"><path d="M5 1h16l6 6v22a2 2 0 0 1-2 2H5a2 2 0 0 1-2-2V3a2 2 0 0 1 2-2z" fill="#1a73d6"/><path d="M21 1l6 6h-6z" fill="#7cc0ff"/><path d="M7 13h8M7 17h18M7 21h18M7 25h12" stroke="#d8ebff" stroke-width="1.500"/><rect x="17" y="10" width="8" height="5" fill="#7cc0ff"/></svg>
<svg style="left:1071.0px;top:1394.0px;" width="32" height="32" viewBox="0 0 32 32"><rect x="1" y="1" width="30" height="30" rx="5" fill="#0d0d0d" stroke="#444"/><text x="11" y="23" font-family="Liberation Sans, sans-serif" font-size="13" font-weight="bold" fill="#2d6cf0" text-anchor="middle">m</text><text x="22" y="24" font-family="Liberation Sans, sans-serif" font-size="19" font-weight="bold" fill="#e8e8e8" text-anchor="middle">R</text></svg>
<svg style="left:1126.0px;top:1394.0px;" width="32" height="32" viewBox="0 0 32 32"><circle cx="11" cy="10" r="8" fill="#2f86d8"/><path d="M5 8c2-3 6-4 8-2s-1 5 2 6-1 5-4 5-7-4-6-9z" fill="#4bb543"/><path d="M15 8l13 3v17l-10 3-3-2z" fill="#b9bdc2"/><path d="M15 8l3 2v21l-3-2z" fill="#8b9096"/><path d="M20 14l6 1.500M20 18l6 1.500" stroke="#7b8087" stroke-width="1.200"/><path d="M3 3l6 1-2 2z" fill="#f2a01e"/></svg>
<svg style="left:1181.0px;top:1394.0px;" width="32" height="32" viewBox="0 0 32 32"><rect x="1" y="5" width="30" height="23" rx="2" fill="#2b2b2b"/><rect x="1" y="5" width="30" height="5" rx="2" fill="#454545"/><path d="M6 14l5 4-5 4" fill="none" stroke="#eee" stroke-width="2.200"/><path d="M14 23h9" stroke="#eee" stroke-width="2.200"/></svg>
<div style="left:1193px;top:1431px;width:8px;height:3px;border-radius:1.500px;background:#777;"></div>
<svg style="left:1236.0px;top:1394.0px;" width="32" height="32" viewBox="0 0 32 32"><circle cx="16" cy="16" r="15" fill="#fff"/><path d="M16 5 8 26M16 5l8 21M11 19h10" fill="none" stroke="#3d7be0" stroke-width="2.400"/><circle cx="16" cy="7" r="2.600" fill="#3d7be0"/><path d="M19 13l6 3-4 3z" fill="#3bd17f"/></svg>
<div style="left:1242px;top:1430px;width:20px;height:4px;border-radius:2px;background:#1976d2;"></div>
<svg style="left:1291.0px;top:1394.0px;" width="32" height="32" viewBox="0 0 32 32"><circle cx="16" cy="16" r="15" fill="#e33b2e"/><path d="M16 16 3 8.500A15 15 0 0 0 9.500 29.500z" fill="#2ba24c"/><path d="M16 16 9.500 29.500A15 15 0 0 0 30.500 12H16z" fill="#fbc116"/><circle cx="16" cy="16" r="7" fill="#fff"/><circle cx="16" cy="16" r="5.500" fill="#3f7fea"/></svg>
<div style="left:1303px;top:1431px;width:8px;height:3px;border-radius:1.500px;background:#777;"></div>
<svg style="left:1346.0px;top:1394.0px;" width="32" height="32" viewBox="0 0 32 32"><path d="M2 3h24l4 10-3 14-20 3z" fill="#13a7e8"/><path d="M4 24l22 6 4-8z" fill="#f5e52c"/><rect x="7" y="7" width="18" height="18" fill="#000"/><text x="16" y="17" font-family="Liberation Sans, sans-serif" font-size="9" font-weight="bold" fill="#fff" text-anchor="middle">WS</text><rect x="9" y="21" width="7" height="1.500" fill="#fff"/></svg>
<div style="left:1358px;top:1431px;width:8px;height:3px;border-radius:1.500px;background:#777;"></div>
<svg style="left:1401.0px;top:1394.0px;" width="32" height="32" viewBox="0 0 32 32"><path d="M6 1h14l7 7v22H6z" fill="#fcfcfc" stroke="#c8c8c8"/><path d="M20 1v7h7" fill="#ececec" stroke="#c8c8c8"/></svg>
<div style="left:1413px;top:1431px;width:8px;height:3px;border-radius:1.500px;background:#777;"></div>
<svg style="left:1456.0px;top:1394.0px;" width="32" height="32" viewBox="0 0 32 32"><rect x="1" y="1" width="30" height="30" fill="#ffffc8"/><text x="16" y="15" font-family="Liberation Sans, sans-serif" font-size="15" font-weight="bold" fill="#141478" text-anchor="middle">VB-</text><text x="16" y="30" font-family="Liberation Sans, sans-serif" font-size="15" font-weight="bold" fill="#141478" text-anchor="middle">NET</text></svg>
<div style="left:1468px;top:1431px;width:8px;height:3px;border-radius:1.500px;background:#777;"></div>
<svg style="left:1511.0px;top:1394.0px;" width="32" height="32" viewBox="0 0 32 32"><path d="M2 2h9L8 5l6 6-3 3-6-6-3 3z" fill="#2f9fe6"/><path d="M30 30h-9l3-3-6-6 3-3 6 6 3-3z" fill="#5cc12f"/><rect x="8" y="13" width="15" height="12" rx="2" fill="#b9bdc2" stroke="#7d8288"/><path d="M11 13V10a4.500 4.500 0 0 1 9 0v3" fill="none" stroke="#9da2a8" stroke-width="2.500"/></svg>
<div style="left:1523px;top:1431px;width:8px;height:3px;border-radius:1.500px;background:#777;"></div>
<svg style="left:1566.0px;top:1394.0px;" width="32" height="32" viewBox="0 0 32 32"><rect x="5" y="3" width="22" height="27" rx="2" fill="#35b4e8"/><rect x="5" y="28" width="22" height="3" fill="#8b3a12"/><path d="M9 10h14M9 15h14M9 20h14M9 25h14" stroke="#0f6a94" stroke-width="1.800"/><path d="M9 1v4M14 1v4M19 1v4M24 1v4" stroke="#0f6a94" stroke-width="2"/></svg>
<div style="left:1578px;top:1431px;width:8px;height:3px;border-radius:1.500px;background:#777;"></div>
<svg style="left:1621.0px;top:1394.0px;" width="32" height="32" viewBox="0 0 32 32"><ellipse cx="16" cy="23" rx="11" ry="8" fill="#f5b915"/><circle cx="15" cy="9" r="7" fill="#f8c520"/><path d="M19 9l7 1-6 3z" fill="#f0701a"/><circle cx="16" cy="7" r="1.300" fill="#222"/><path d="M8 20c3 4 10 4 14-1" fill="none" stroke="#d99a0a" stroke-width="1.500"/></svg>
<div style="left:1633px;top:1431px;width:8px;height:3px;border-radius:1.500px;background:#777;"></div>
<svg style="left:1676.0px;top:1394.0px;" width="32" height="32" viewBox="0 0 32 32"><path d="M16 2c-6 0-12 3-12 10 0 5 3 8 5 9 1 4 2 9 5 9s3-3 3-6c2 0 4 0 5 1s3 2 4 0c-2 0-3-2-3-4 3-2 5-5 5-9C28 5 22 2 16 2z" fill="#3a6f9f"/><path d="M12 8c-3 0-5 2-5 5s2 6 4 7M20 7c3 0 5 3 5 6s-1 5-3 7M14 12c0 5 1 8 1 12" fill="none" stroke="#e9f0f6" stroke-width="1.300"/></svg>
<div style="left:1688px;top:1431px;width:8px;height:3px;border-radius:1.500px;background:#777;"></div>
<svg style="left:2188px;top:1403px;" width="20" height="14" viewBox="0 0 20 14"><path d="M3 11l7-7 7 7" fill="none" stroke="#222" stroke-width="1.800"/></svg>
<div style="left:2228px;top:1400px;width:20px;height:20px;background:#e0103a;"></div>
<svg style="left:2228px;top:1400px;" width="20" height="20" viewBox="0 0 20 20"><path d="M4 4h9v9l-3-3v-3H7zM4 13l3-3v3z" fill="#fff"/><path d="M16 8v6M16 15.500v1.800" stroke="#fff" stroke-width="1.500"/></svg>
<div style="left:2268px;top:1400px;width:20px;height:20px;background:#ef443b;"></div>
<svg style="left:2268px;top:1400px;" width="20" height="20" viewBox="0 0 20 20"><path d="M8 5.500 12.500 10 8 14.500 3.500 10z" fill="#fff"/><path d="M11.500 5l5 5-5 5" fill="none" stroke="#fff" stroke-width="1.600"/></svg>
<svg style="left:2308px;top:1398px;" width="20" height="24" viewBox="0 0 20 24"><rect x="4.500" y="7" width="9" height="14" rx="1.500" fill="none" stroke="#222" stroke-width="1.300"/><rect x="6.500" y="2.500" width="5" height="4.500" fill="none" stroke="#222" stroke-width="1.200"/><path d="M13 17l2.500 3 3-4.500" fill="none" stroke="#222" stroke-width="1.200"/></svg>
<svg style="left:2347px;top:1399px;" width="20" height="22" viewBox="0 0 20 22"><path d="M3 2h14v10c0 5-3 8-7 8s-7-3-7-8z" fill="#f4f4f4" stroke="#c8c8c8"/><path d="M3 9h14M10 2v7" stroke="#c8c8c8"/><path d="M8 13l4 4M12 13l-4 4" stroke="#888" stroke-width="1"/></svg>
<svg style="left:2386px;top:1398px;" width="24" height="24" viewBox="0 0 24 24"><rect x="2" y="4" width="16" height="13" rx="1" fill="none" stroke="#222" stroke-width="1.400"/><path d="M6 21h9M10.500 17v4" stroke="#222" stroke-width="1.400"/><rect x="16.500" y="2" width="4.500" height="7" rx="1" fill="#e2e2e2" stroke="#222" stroke-width="1.200"/><path d="M19 9v12" stroke="#222" stroke-width="1.200"/></svg>
<svg style="left:2417px;top:1399px;" width="24" height="22" viewBox="0 0 24 22"><path d="M2 8h4l5-4.500v15L6 14H2z" fill="none" stroke="#222" stroke-width="1.300"/><path d="M14 7.500a5 5 0 0 1 0 7M17 5a8.500 8.500 0 0 1 0 12M20 2.500a12 12 0 0 1 0 17" fill="none" stroke="#222" stroke-width="1.200"/></svg>
<span class="t" style="top:1387.0px;line-height:24px;font-size:15.5px;right:25px;color:#111;">22:09</span>
<span class="t" style="top:1408.0px;line-height:24px;font-size:15.5px;right:25px;color:#111;">04/03/2025</span>
</div></body></html>
